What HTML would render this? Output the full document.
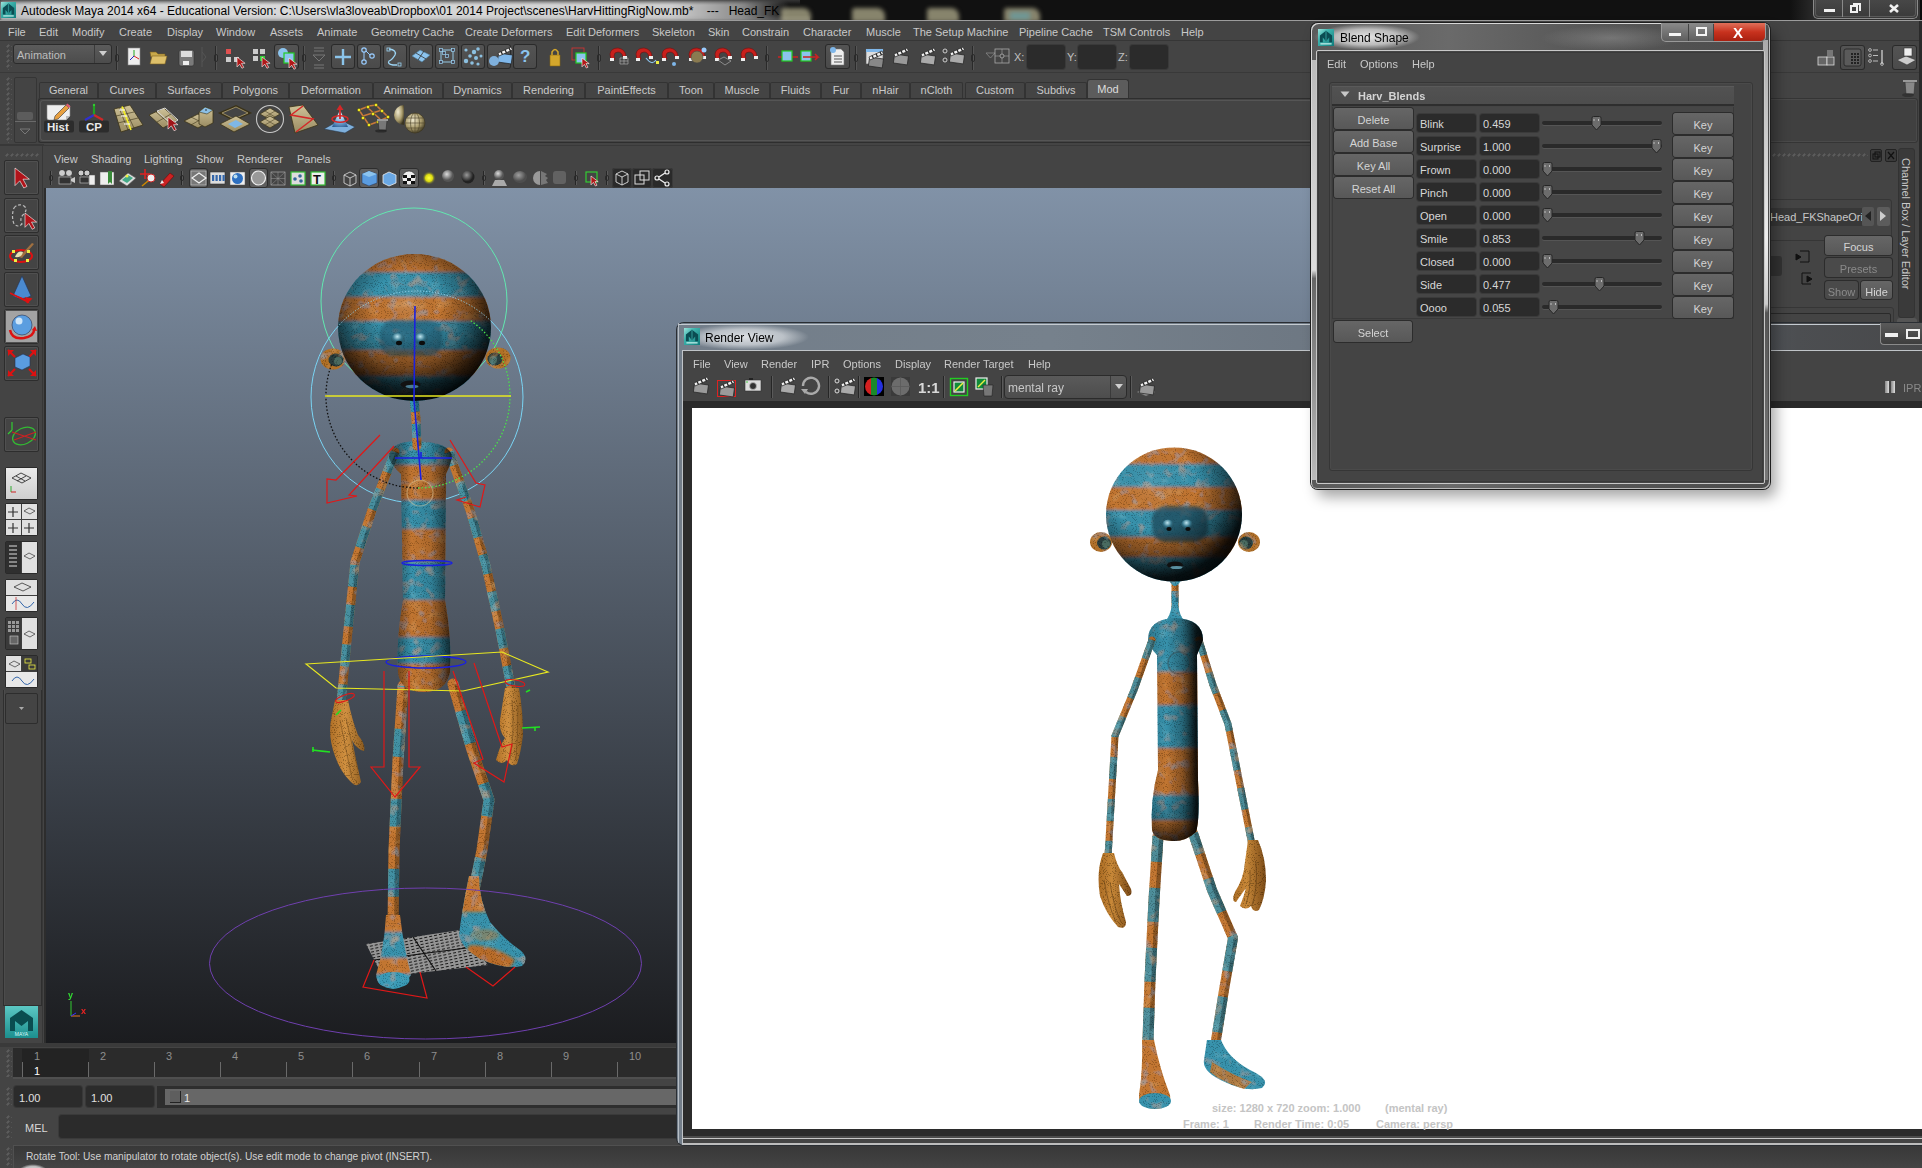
<!DOCTYPE html>
<html><head><meta charset="utf-8"><style>
*{margin:0;padding:0;box-sizing:border-box}
html,body{width:1922px;height:1168px;overflow:hidden;background:#444;font-family:"Liberation Sans",sans-serif;font-size:11px;color:#c9c9c9;position:relative}
.a{position:absolute}
svg.a{overflow:visible}
.t{position:absolute;white-space:nowrap;line-height:1}
.fld{position:absolute;background:#2b2b2b;border-radius:3px;box-shadow:0 0 0 1px #3d3d3d}
.btn{position:absolute;background:linear-gradient(#666,#585858);border-radius:3px;box-shadow:0 0 0 1px #2c2c2c;color:#d4d4d4;text-align:center;padding-top:2px}
.ib{position:absolute;background:#3a3a3a;border-radius:3px;box-shadow:inset 0 0 0 1px #2e2e2e}
.dots{position:absolute;background-image:radial-gradient(circle at 1.5px 2.5px,#5c5c5c 0.9px,transparent 1.2px),radial-gradient(circle at 2.5px 1.5px,#5c5c5c 0.9px,transparent 1.2px);background-size:5px 5px}
</style></head><body>
<div class="a" style="left:0px;top:0px;width:1922px;height:21px;background:#111"></div>
<div class="a" style="left:0px;top:0px;width:790px;height:21px;background:linear-gradient(90deg,#b9bbbd 0%,#d2d3d4 6%,#d9d9d9 40%,#cfcfcf 85%,rgba(160,160,160,0.85) 94%,rgba(40,40,40,0) 100%);border-radius:0 10px 0 0;filter:blur(1.5px)"></div>
<div class="a" style="left:0px;top:15px;width:810px;height:6px;background:linear-gradient(rgba(255,255,255,0),rgba(150,150,150,.4))"></div>
<div class="a" style="left:0px;top:0px;width:800px;height:5px;background:linear-gradient(rgba(70,70,70,.65),rgba(70,70,70,0))"></div>
<div class="a" style="left:781px;top:8px;width:30px;height:14px;background:rgba(215,210,170,.6);border-radius:3px 8px 0 0;filter:blur(2px)"></div>
<div class="a" style="left:852px;top:8px;width:33px;height:14px;background:rgba(215,210,170,.6);border-radius:3px 8px 0 0;filter:blur(2px)"></div>
<div class="a" style="left:927px;top:8px;width:32px;height:14px;background:rgba(215,210,170,.6);border-radius:3px 8px 0 0;filter:blur(2px)"></div>
<div class="a" style="left:1004px;top:8px;width:36px;height:14px;background:rgba(215,210,170,.6);border-radius:3px 8px 0 0;filter:blur(2px)"></div>
<div class="a" style="left:1010px;top:12px;width:20px;height:8px;background:rgba(90,170,190,.5);filter:blur(2px)"></div>
<svg class="a" style="left:1px;top:2px;" width="15" height="16" viewBox="0 0 15 16"><defs><linearGradient id="mg1_2" x1="0" y1="0" x2="1" y2="1"><stop offset="0" stop-color="#9ee4dc"/><stop offset=".35" stop-color="#3fb4ae"/><stop offset="1" stop-color="#0f7a7a"/></linearGradient></defs><rect x="0" y="0" width="15" height="16" fill="url(#mg1_2)"/><path d="M1.7999999999999998 12.48 L1.7999999999999998 6.08 L7.5 1.6 L13.2 6.08 L13.2 12.48 L10.5 12.48 L10.5 8.0 L7.5 11.52 L4.5 8.0 L4.5 12.48 z" fill="#0b4c52"/><path d="M7.5 1.6 L7.5 11.52" stroke="#2a8a8a" stroke-width="1.2"/><rect x="2.25" y="13.12" width="10.5" height="1.6" fill="#bdeee8" opacity=".8"/></svg>
<span class="t" style="left:21px;top:5px;font-size:12px;color:#000;">Autodesk Maya 2014 x64 - Educational Version: C:\Users\vla3loveab\Dropbox\01 2014 Project\scenes\HarvHittingRigNow.mb* &nbsp;&nbsp; --- &nbsp;&nbsp;Head_FK</span>
<div class="a" style="left:1790px;top:0px;width:132px;height:20px;background:linear-gradient(90deg,rgba(17,17,17,0),#2c2c2c 20%,#333)"></div>
<div class="a" style="left:1813px;top:0px;width:105px;height:19px;border:1px solid #8a8a8a;border-top:none;border-radius:0 0 5px 5px;background:linear-gradient(#474747,#3a3a3a)"></div>
<div class="a" style="left:1815px;top:0px;width:101px;height:17px;border:1px solid #5a5a5a;border-top:none;border-radius:0 0 4px 4px"></div>
<div class="a" style="left:1842px;top:0px;width:1px;height:17px;background:#8a8a8a"></div>
<div class="a" style="left:1869px;top:0px;width:1px;height:17px;background:#8a8a8a"></div>
<div class="a" style="left:1824px;top:9px;width:11px;height:3px;background:#f0f0f0"></div>
<div class="a" style="left:1850px;top:5px;width:8px;height:8px;border:2px solid #f0f0f0"></div>
<div class="a" style="left:1853px;top:3px;width:8px;height:8px;border-top:2px solid #f0f0f0;border-right:2px solid #f0f0f0"></div>
<svg class="a" style="left:1889px;top:4px;" width="10" height="9" viewBox="0 0 10 9"><path d="M1 1 L9 8 M9 1 L1 8" stroke="#f0f0f0" stroke-width="2.6"/></svg>
<div class="a" style="left:1920px;top:0px;width:2px;height:1168px;background:#0a0a0a"></div>
<div class="a" style="left:0px;top:20px;width:1922px;height:1px;background:#9c9c9c"></div>
<div class="a" style="left:0px;top:21px;width:1922px;height:20px;background:#444"></div>
<span class="t" style="left:8px;top:27px;">File</span>
<span class="t" style="left:39px;top:27px;">Edit</span>
<span class="t" style="left:72px;top:27px;">Modify</span>
<span class="t" style="left:119px;top:27px;">Create</span>
<span class="t" style="left:167px;top:27px;">Display</span>
<span class="t" style="left:216px;top:27px;">Window</span>
<span class="t" style="left:270px;top:27px;">Assets</span>
<span class="t" style="left:317px;top:27px;">Animate</span>
<span class="t" style="left:371px;top:27px;">Geometry Cache</span>
<span class="t" style="left:465px;top:27px;">Create Deformers</span>
<span class="t" style="left:566px;top:27px;">Edit Deformers</span>
<span class="t" style="left:652px;top:27px;">Skeleton</span>
<span class="t" style="left:708px;top:27px;">Skin</span>
<span class="t" style="left:742px;top:27px;">Constrain</span>
<span class="t" style="left:803px;top:27px;">Character</span>
<span class="t" style="left:866px;top:27px;">Muscle</span>
<span class="t" style="left:913px;top:27px;">The Setup Machine</span>
<span class="t" style="left:1019px;top:27px;">Pipeline Cache</span>
<span class="t" style="left:1103px;top:27px;">TSM Controls</span>
<span class="t" style="left:1181px;top:27px;">Help</span>
<div class="a" style="left:0px;top:40px;width:1922px;height:1px;background:#363636"></div>
<div class="a" style="left:0px;top:41px;width:1922px;height:32px;background:#444"></div>
<div class="dots" style="left:6px;top:44px;width:6px;height:26px"></div>
<div class="a" style="left:13px;top:44px;width:99px;height:20px;background:linear-gradient(#5b5b5b,#4c4c4c);border:1px solid #2b2b2b;border-radius:3px"></div>
<div class="a" style="left:94px;top:45px;width:1px;height:18px;background:#3a3a3a"></div>
<span class="t" style="left:17px;top:50px;color:#bdbdbd;">Animation</span>
<svg class="a" style="left:98px;top:50px;" width="10" height="8" viewBox="0 0 10 8"><path d="M1 1 L9 1 L5 6 z" fill="#cfcfcf"/></svg>
<div class="a" style="left:116px;top:46px;width:1px;height:24px;background:#2a2a2a"></div>
<div class="a" style="left:117px;top:46px;width:1px;height:24px;background:#555"></div>
<div class="a" style="left:115px;top:54px;width:4px;height:8px;border:1px solid #2a2a2a;border-radius:2px"></div>
<svg class="a" style="left:0px;top:0px;" width="1" height="1" viewBox="0 0 1 1"><rect x="128" y="48" width="12" height="17" rx="0" fill="#eee" stroke="#888" stroke-width="0.6"/><line x1="134" y1="50" x2="134" y2="56" stroke="#2a2" stroke-width="1"/><line x1="134" y1="56" x2="130" y2="60" stroke="#22c" stroke-width="1"/><line x1="134" y1="56" x2="139" y2="59" stroke="#d22" stroke-width="1"/><path d="M150 52 h6 l2 2 h7 v3 h-14 z" fill="#c9a94a" stroke="#7a6020" stroke-width="0.6" /><path d="M150 64 l2 -8 h15 l-2 8 z" fill="#dec06a" stroke="#7a6020" stroke-width="0.6" /><rect x="179" y="50" width="15" height="16" rx="2" fill="#7a7a7a" stroke="#333" stroke-width="0.6"/><rect x="181" y="51" width="11" height="6" rx="0" fill="#ddd" stroke="none" stroke-width="1"/><rect x="183" y="61" width="6" height="4" rx="0" fill="#eee" stroke="none" stroke-width="1"/><path d="M202 47 l0 20 M202 52 l4 5 l-4 5" fill="none" stroke="#555" stroke-width="1" /></svg>
<div class="a" style="left:215px;top:46px;width:1px;height:24px;background:#2a2a2a"></div>
<div class="a" style="left:216px;top:46px;width:1px;height:24px;background:#555"></div>
<div class="a" style="left:214px;top:54px;width:4px;height:8px;border:1px solid #2a2a2a;border-radius:2px"></div>
<svg class="a" style="left:0px;top:0px;" width="1" height="1" viewBox="0 0 1 1"><rect x="226" y="49" width="5" height="5" rx="0" fill="#e05050" stroke="none" stroke-width="1"/><rect x="226" y="57" width="5" height="5" rx="0" fill="#ccc" stroke="none" stroke-width="1"/><rect x="234" y="57" width="5" height="5" rx="0" fill="#ccc" stroke="none" stroke-width="1"/><path d="M237 57 l0 9.9 l2.7 -2.7 l2.25 4.05 l1.8 -0.9 l-2.25 -4.05 l3.6 0 z" fill="#b01818" stroke="#fff" stroke-width="0.6"/><rect x="253" y="49" width="5" height="5" rx="0" fill="#ccc" stroke="none" stroke-width="1"/><rect x="260" y="49" width="5" height="5" rx="0" fill="#ccc" stroke="none" stroke-width="1"/><rect x="253" y="56" width="5" height="5" rx="0" fill="#ccc" stroke="none" stroke-width="1"/><rect x="260" y="56" width="5" height="5" rx="0" fill="#3c3" stroke="none" stroke-width="1"/><path d="M262 57 l0 9.9 l2.7 -2.7 l2.25 4.05 l1.8 -0.9 l-2.25 -4.05 l3.6 0 z" fill="#b01818" stroke="#fff" stroke-width="0.6"/></svg>
<div class="a" style="left:274px;top:44px;width:25px;height:25px;background:linear-gradient(#545454,#4a4a4a);border-radius:3px;box-shadow:inset 0 0 0 1px #2a2a2a"></div>
<svg class="a" style="left:0px;top:0px;" width="1" height="1" viewBox="0 0 1 1"><circle cx="283" cy="53" r="5" fill="#8cc4ee" stroke="none" stroke-width="1"/><rect x="284" y="53" width="10" height="10" rx="0" fill="#8cc4ee" stroke="#2c2" stroke-width="1.2"/><path d="M289 58 l0 9.9 l2.7 -2.7 l2.25 4.05 l1.8 -0.9 l-2.25 -4.05 l3.6 0 z" fill="#b01818" stroke="#fff" stroke-width="0.6"/></svg>
<div class="a" style="left:303px;top:46px;width:1px;height:24px;background:#2a2a2a"></div>
<div class="a" style="left:304px;top:46px;width:1px;height:24px;background:#555"></div>
<div class="a" style="left:302px;top:54px;width:4px;height:8px;border:1px solid #2a2a2a;border-radius:2px"></div>
<svg class="a" style="left:313px;top:47px;" width="12" height="22" viewBox="0 0 12 22"><path d="M1 1 h10 M1 4 h10 M0 8 L12 8 L6 14 z M1 18 h10 M1 21 h10" stroke="#777" fill="none"/></svg>
<div class="a" style="left:331px;top:44px;width:24px;height:25px;background:linear-gradient(#545454,#4a4a4a);border-radius:3px;box-shadow:inset 0 0 0 1px #2a2a2a"></div>
<div class="a" style="left:357px;top:44px;width:24px;height:25px;background:linear-gradient(#545454,#4a4a4a);border-radius:3px;box-shadow:inset 0 0 0 1px #2a2a2a"></div>
<div class="a" style="left:383px;top:44px;width:24px;height:25px;background:linear-gradient(#545454,#4a4a4a);border-radius:3px;box-shadow:inset 0 0 0 1px #2a2a2a"></div>
<div class="a" style="left:409px;top:44px;width:24px;height:25px;background:linear-gradient(#545454,#4a4a4a);border-radius:3px;box-shadow:inset 0 0 0 1px #2a2a2a"></div>
<div class="a" style="left:435px;top:44px;width:24px;height:25px;background:linear-gradient(#545454,#4a4a4a);border-radius:3px;box-shadow:inset 0 0 0 1px #2a2a2a"></div>
<div class="a" style="left:461px;top:44px;width:24px;height:25px;background:linear-gradient(#545454,#4a4a4a);border-radius:3px;box-shadow:inset 0 0 0 1px #2a2a2a"></div>
<div class="a" style="left:487px;top:44px;width:24px;height:25px;background:linear-gradient(#545454,#4a4a4a);border-radius:3px;box-shadow:inset 0 0 0 1px #2a2a2a"></div>
<div class="a" style="left:513px;top:44px;width:24px;height:25px;background:linear-gradient(#545454,#4a4a4a);border-radius:3px;box-shadow:inset 0 0 0 1px #2a2a2a"></div>
<svg class="a" style="left:0px;top:0px;" width="1" height="1" viewBox="0 0 1 1"><path d="M343 49 v16 M335 57 h16" fill="none" stroke="#8bc4ea" stroke-width="2.4" /><circle cx="364" cy="50" r="2.2" fill="none" stroke="#9cf" stroke-width="1.2"/><circle cx="364" cy="62" r="2.2" fill="none" stroke="#9cf" stroke-width="1.2"/><circle cx="372" cy="56" r="2.2" fill="none" stroke="#9cf" stroke-width="1.2"/><line x1="364" y1="52" x2="364" y2="60" stroke="#9cf" stroke-width="1"/><line x1="366" y1="51" x2="370" y2="55" stroke="#9cf" stroke-width="1"/><path d="M389 49 q8 1 6 6 q-3 5 -6 6 q-2 3 4 4 l4 0" fill="none" stroke="#9cd4f4" stroke-width="1.3" /><rect x="387" y="48" width="3" height="3" rx="0" fill="none" stroke="#9cd4f4" stroke-width="0.8"/><rect x="398" y="63" width="3" height="3" rx="0" fill="none" stroke="#9cd4f4" stroke-width="0.8"/><path d="M412 56 l8 -6 l10 5 l-8 7 z" fill="#8cc4ee" stroke="#4a7a9a" stroke-width="0.6" /><line x1="416" y1="53" x2="426" y2="59" stroke="#333" stroke-width="0.8"/><line x1="424" y1="51" x2="418" y2="60" stroke="#333" stroke-width="0.8"/><rect x="441" y="50" width="12" height="12" rx="0" fill="none" stroke="#9cd4f4" stroke-width="0.9"/><rect x="439.5" y="48.5" width="3" height="3" rx="0" fill="#445" stroke="#9cd4f4" stroke-width="0.7"/><rect x="451.5" y="48.5" width="3" height="3" rx="0" fill="#445" stroke="#9cd4f4" stroke-width="0.7"/><rect x="439.5" y="60.5" width="3" height="3" rx="0" fill="#445" stroke="#9cd4f4" stroke-width="0.7"/><rect x="451.5" y="60.5" width="3" height="3" rx="0" fill="#445" stroke="#9cd4f4" stroke-width="0.7"/><rect x="445.5" y="54.5" width="3" height="3" rx="0" fill="#445" stroke="#9cd4f4" stroke-width="0.7"/><rect x="442.5" y="51.5" width="3" height="3" rx="0" fill="#445" stroke="#9cd4f4" stroke-width="0.7"/><circle cx="466" cy="50" r="1.6" fill="#8cc0e0" stroke="none" stroke-width="1"/><circle cx="474" cy="52" r="2.2" fill="#8cc0e0" stroke="none" stroke-width="1"/><circle cx="478" cy="49" r="1.8" fill="#8cc0e0" stroke="none" stroke-width="1"/><circle cx="470" cy="56" r="1.8" fill="#8cc0e0" stroke="none" stroke-width="1"/><circle cx="476" cy="58" r="2" fill="#8cc0e0" stroke="none" stroke-width="1"/><circle cx="481" cy="56" r="1.5" fill="#8cc0e0" stroke="none" stroke-width="1"/><circle cx="466" cy="61" r="2.2" fill="#8cc0e0" stroke="none" stroke-width="1"/><circle cx="472" cy="63" r="1.8" fill="#8cc0e0" stroke="none" stroke-width="1"/><circle cx="478" cy="64" r="1.6" fill="#8cc0e0" stroke="none" stroke-width="1"/><path d="M498 54 L512 54 L512 63 L498 63 z" fill="#7fb7ea" stroke="#222" stroke-width="0.7" transform="rotate(8 505 58)"/><path d="M498 53 L511 47 L512.5 50 L499 56 z" fill="#f0f0f0" stroke="#222" stroke-width="0.7"/><path d="M501 51.5 l1.5 3 M505 49.7 l1.5 3 M509 48 l1.5 3" stroke="#222" stroke-width="1.3"/><circle cx="494" cy="61" r="5" fill="#7fb0dc" stroke="none" stroke-width="1"/></svg>
<span class="t" style="left:520px;top:48px;font-size:17px;color:#8cc4ee;font-weight:bold;">?</span>
<svg class="a" style="left:0px;top:0px;" width="1" height="1" viewBox="0 0 1 1"><path d="M550 55 h10 v11 h-10 z" fill="#d4a72c" stroke="#8a6a10" stroke-width="0.6" /><path d="M552 55 v-3 q3 -5 6 0 v3" fill="none" stroke="#d4a72c" stroke-width="1.5" /></svg>
<svg class="a" style="left:0px;top:0px;" width="1" height="1" viewBox="0 0 1 1"><rect x="572" y="48" width="12" height="12" rx="0" fill="none" stroke="#d33" stroke-width="0.8"/><rect x="576" y="53" width="10" height="10" rx="0" fill="#8cc4ee" stroke="#2c2" stroke-width="1.2"/><path d="M582 58 l0 8.8 l2.4000000000000004 -2.4000000000000004 l2.0 3.6 l1.6 -0.8 l-2.0 -3.6 l3.2 0 z" fill="#b01818" stroke="#fff" stroke-width="0.6"/></svg>
<div class="a" style="left:598px;top:46px;width:1px;height:24px;background:#2a2a2a"></div>
<div class="a" style="left:599px;top:46px;width:1px;height:24px;background:#555"></div>
<div class="a" style="left:597px;top:54px;width:4px;height:8px;border:1px solid #2a2a2a;border-radius:2px"></div>
<svg class="a" style="left:0px;top:0px;" width="1" height="1" viewBox="0 0 1 1"><path d="M611 60 L610 54 Q611 48 618 48 Q625 49 626 56 L623 57 Q622 52 618 52 Q614 52 614 56 L615 59 z" fill="#c8201c" stroke="#7a0d0d" stroke-width="0.6"/><rect x="610" y="58" width="4" height="3" fill="#eee"/><rect x="623" y="56" width="4" height="3" fill="#eee"/><path d="M637 60 L636 54 Q637 48 644 48 Q651 49 652 56 L649 57 Q648 52 644 52 Q640 52 640 56 L641 59 z" fill="#c8201c" stroke="#7a0d0d" stroke-width="0.6"/><rect x="636" y="58" width="4" height="3" fill="#eee"/><rect x="649" y="56" width="4" height="3" fill="#eee"/><path d="M663 60 L662 54 Q663 48 670 48 Q677 49 678 56 L675 57 Q674 52 670 52 Q666 52 666 56 L667 59 z" fill="#c8201c" stroke="#7a0d0d" stroke-width="0.6"/><rect x="662" y="58" width="4" height="3" fill="#eee"/><rect x="675" y="56" width="4" height="3" fill="#eee"/><path d="M690 60 L689 54 Q690 48 697 48 Q704 49 705 56 L702 57 Q701 52 697 52 Q693 52 693 56 L694 59 z" fill="#c8201c" stroke="#7a0d0d" stroke-width="0.6"/><rect x="689" y="58" width="4" height="3" fill="#eee"/><rect x="702" y="56" width="4" height="3" fill="#eee"/><path d="M716 60 L715 54 Q716 48 723 48 Q730 49 731 56 L728 57 Q727 52 723 52 Q719 52 719 56 L720 59 z" fill="#c8201c" stroke="#7a0d0d" stroke-width="0.6"/><rect x="715" y="58" width="4" height="3" fill="#eee"/><rect x="728" y="56" width="4" height="3" fill="#eee"/><path d="M742 60 L741 54 Q742 48 749 48 Q756 49 757 56 L754 57 Q753 52 749 52 Q745 52 745 56 L746 59 z" fill="#c8201c" stroke="#7a0d0d" stroke-width="0.6"/><rect x="741" y="58" width="4" height="3" fill="#eee"/><rect x="754" y="56" width="4" height="3" fill="#eee"/><path d="M620 58 l8 0 l0 6 l-8 0 z M624 58 v6 M620 61 h8" fill="none" stroke="#bbb" stroke-width="0.6" /><path d="M646 58 q6 8 10 2" fill="none" stroke="#8cc4ee" stroke-width="1.2" /><rect x="656" y="61" width="3" height="3" rx="0" fill="#ee4" stroke="none" stroke-width="1"/><circle cx="674" cy="64" r="2" fill="#7fb7ea" stroke="none" stroke-width="1"/><circle cx="697" cy="57" r="6" fill="#8a7a50" stroke="#444" stroke-width="0.6"/><circle cx="704" cy="50" r="2.5" fill="#9cf" stroke="none" stroke-width="1"/><path d="M718 60 l6 -3 l7 4 l-6 4 z" fill="none" stroke="#bbb" stroke-width="0.6" /></svg>
<div class="a" style="left:766px;top:46px;width:1px;height:24px;background:#2a2a2a"></div>
<div class="a" style="left:767px;top:46px;width:1px;height:24px;background:#555"></div>
<div class="a" style="left:765px;top:54px;width:4px;height:8px;border:1px solid #2a2a2a;border-radius:2px"></div>
<svg class="a" style="left:0px;top:0px;" width="1" height="1" viewBox="0 0 1 1"><path d="M778 57 h20" fill="none" stroke="#c22" stroke-width="1.5" /><rect x="782" y="51" width="10" height="10" rx="0" fill="#8cc4ee" stroke="#2c2" stroke-width="1.2"/><rect x="801" y="51" width="10" height="10" rx="0" fill="#8cc4ee" stroke="#2c2" stroke-width="1.2"/><path d="M803 57 h15 l-3 -3 M818 57 l-3 3" fill="none" stroke="#c22" stroke-width="1.5" /></svg>
<div class="a" style="left:825px;top:44px;width:25px;height:25px;background:linear-gradient(#545454,#4a4a4a);border-radius:3px;box-shadow:inset 0 0 0 1px #2a2a2a"></div>
<svg class="a" style="left:0px;top:0px;" width="1" height="1" viewBox="0 0 1 1"><path d="M831 49 h10 l3 3 v13 h-13 z" fill="#eee" stroke="#777" stroke-width="0.6" /><circle cx="833" cy="50" r="3" fill="#7fb7ea" stroke="none" stroke-width="1"/><line x1="834" y1="56" x2="842" y2="56" stroke="#555" stroke-width="1"/><line x1="834" y1="59" x2="842" y2="59" stroke="#555" stroke-width="1"/><line x1="834" y1="62" x2="842" y2="62" stroke="#555" stroke-width="1"/></svg>
<div class="a" style="left:855px;top:46px;width:1px;height:24px;background:#2a2a2a"></div>
<div class="a" style="left:856px;top:46px;width:1px;height:24px;background:#555"></div>
<div class="a" style="left:854px;top:54px;width:4px;height:8px;border:1px solid #2a2a2a;border-radius:2px"></div>
<svg class="a" style="left:0px;top:0px;" width="1" height="1" viewBox="0 0 1 1"><rect x="866" y="49" width="17" height="15" rx="0" fill="#ddd" stroke="#555" stroke-width="0.6"/><rect x="866" y="49" width="17" height="3" rx="0" fill="#7fb7ea" stroke="none" stroke-width="1"/><path d="M869 58 L883 58 L883 67 L869 67 z" fill="#888" stroke="#222" stroke-width="0.7" transform="rotate(8 876 62)"/><path d="M869 57 L882 51 L883.5 54 L870 60 z" fill="#f0f0f0" stroke="#222" stroke-width="0.7"/><path d="M872 55.5 l1.5 3 M876 53.7 l1.5 3 M880 52 l1.5 3" stroke="#222" stroke-width="1.3"/><path d="M894 55 L908 55 L908 64 L894 64 z" fill="#999" stroke="#222" stroke-width="0.7" transform="rotate(8 901 59)"/><path d="M894 54 L907 48 L908.5 51 L895 57 z" fill="#f0f0f0" stroke="#222" stroke-width="0.7"/><path d="M897 52.5 l1.5 3 M901 50.7 l1.5 3 M905 49 l1.5 3" stroke="#222" stroke-width="1.3"/><path d="M921 55 L935 55 L935 64 L921 64 z" fill="#aaa" stroke="#222" stroke-width="0.7" transform="rotate(8 928 59)"/><path d="M921 54 L934 48 L935.5 51 L922 57 z" fill="#f0f0f0" stroke="#222" stroke-width="0.7"/><path d="M924 52.5 l1.5 3 M928 50.7 l1.5 3 M932 49 l1.5 3" stroke="#222" stroke-width="1.3"/><circle cx="945" cy="51" r="2" fill="none" stroke="#ccc" stroke-width="1"/><circle cx="945" cy="60" r="2" fill="none" stroke="#ccc" stroke-width="1"/><path d="M950 54 L964 54 L964 63 L950 63 z" fill="#aaa" stroke="#222" stroke-width="0.7" transform="rotate(8 957 58)"/><path d="M950 53 L963 47 L964.5 50 L951 56 z" fill="#f0f0f0" stroke="#222" stroke-width="0.7"/><path d="M953 51.5 l1.5 3 M957 49.7 l1.5 3 M961 48 l1.5 3" stroke="#222" stroke-width="1.3"/></svg>
<div class="a" style="left:972px;top:46px;width:1px;height:24px;background:#2a2a2a"></div>
<div class="a" style="left:973px;top:46px;width:1px;height:24px;background:#555"></div>
<div class="a" style="left:971px;top:54px;width:4px;height:8px;border:1px solid #2a2a2a;border-radius:2px"></div>
<svg class="a" style="left:0px;top:0px;" width="1" height="1" viewBox="0 0 1 1"><path d="M986 53 h9 l-4.5 5 z" fill="none" stroke="#888" stroke-width="0.8" /><rect x="995" y="49" width="14" height="14" rx="0" fill="none" stroke="#aaa" stroke-width="0.8"/><line x1="1002" y1="49" x2="1002" y2="63" stroke="#aaa" stroke-width="0.6"/><line x1="995" y1="56" x2="1009" y2="56" stroke="#aaa" stroke-width="0.6"/><circle cx="1002" cy="56" r="2" fill="#444" stroke="#ccc" stroke-width="0.6"/></svg>
<span class="t" style="left:1014px;top:52px;color:#c0c0c0;">X:</span>
<div class="a" style="left:1027px;top:45px;width:38px;height:24px;background:#2b2b2b;border-radius:3px;box-shadow:0 0 0 1px #3a3a3a"></div>
<span class="t" style="left:1067px;top:52px;color:#c0c0c0;">Y:</span>
<div class="a" style="left:1078px;top:45px;width:38px;height:24px;background:#2b2b2b;border-radius:3px;box-shadow:0 0 0 1px #3a3a3a"></div>
<span class="t" style="left:1118px;top:52px;color:#c0c0c0;">Z:</span>
<div class="a" style="left:1130px;top:45px;width:38px;height:24px;background:#2b2b2b;border-radius:3px;box-shadow:0 0 0 1px #3a3a3a"></div>
<div class="a" style="left:1840px;top:45px;width:25px;height:25px;background:linear-gradient(#545454,#4a4a4a);border-radius:3px;box-shadow:inset 0 0 0 1px #2a2a2a"></div>
<div class="a" style="left:1892px;top:45px;width:25px;height:25px;background:linear-gradient(#545454,#4a4a4a);border-radius:3px;box-shadow:inset 0 0 0 1px #2a2a2a"></div>
<svg class="a" style="left:0px;top:0px;" width="1" height="1" viewBox="0 0 1 1"><rect x="1818" y="57" width="9" height="8" rx="0" fill="#666" stroke="#ddd" stroke-width="0.8"/><rect x="1827" y="57" width="7" height="8" rx="0" fill="#666" stroke="#ddd" stroke-width="0.8"/><rect x="1827" y="50" width="6" height="6" rx="0" fill="#777" stroke="none" stroke-width="1"/><rect x="1844" y="49" width="17" height="17" rx="2" fill="#5a5a5a" stroke="#222" stroke-width="0.8"/><rect x="1851" y="53" width="2" height="2" rx="0" fill="#222" stroke="none" stroke-width="1"/><rect x="1851" y="56" width="2" height="2" rx="0" fill="#222" stroke="none" stroke-width="1"/><rect x="1851" y="59" width="2" height="2" rx="0" fill="#222" stroke="none" stroke-width="1"/><rect x="1851" y="62" width="2" height="2" rx="0" fill="#222" stroke="none" stroke-width="1"/><rect x="1854" y="53" width="2" height="2" rx="0" fill="#222" stroke="none" stroke-width="1"/><rect x="1854" y="56" width="2" height="2" rx="0" fill="#222" stroke="none" stroke-width="1"/><rect x="1854" y="59" width="2" height="2" rx="0" fill="#222" stroke="none" stroke-width="1"/><rect x="1854" y="62" width="2" height="2" rx="0" fill="#222" stroke="none" stroke-width="1"/><rect x="1857" y="53" width="2" height="2" rx="0" fill="#222" stroke="none" stroke-width="1"/><rect x="1857" y="56" width="2" height="2" rx="0" fill="#222" stroke="none" stroke-width="1"/><rect x="1857" y="59" width="2" height="2" rx="0" fill="#222" stroke="none" stroke-width="1"/><rect x="1857" y="62" width="2" height="2" rx="0" fill="#222" stroke="none" stroke-width="1"/><circle cx="1870" cy="50.0" r="1.4" fill="none" stroke="#ddd" stroke-width="0.7"/><line x1="1873" y1="50.0" x2="1878" y2="50.0" stroke="#ddd" stroke-width="0.8"/><circle cx="1870" cy="55.5" r="1.4" fill="none" stroke="#ddd" stroke-width="0.7"/><line x1="1873" y1="55.5" x2="1878" y2="55.5" stroke="#ddd" stroke-width="0.8"/><circle cx="1870" cy="61.0" r="1.4" fill="none" stroke="#ddd" stroke-width="0.7"/><line x1="1873" y1="61.0" x2="1878" y2="61.0" stroke="#ddd" stroke-width="0.8"/><line x1="1882" y1="50" x2="1882" y2="64" stroke="#ddd" stroke-width="1.2"/><circle cx="1882" cy="64" r="1.4" fill="none" stroke="#ddd" stroke-width="0.7"/><path d="M1897 60 l9 -4 l10 4 l-9 5 z" fill="#ccc" stroke="#333" stroke-width="0.6" /><rect x="1904" y="48" width="8" height="8" rx="0" fill="#eee" stroke="#333" stroke-width="0.6"/></svg>
<div class="a" style="left:0px;top:72px;width:1922px;height:1px;background:#393939"></div>
<div class="dots" style="left:6px;top:77px;width:6px;height:66px"></div>
<div class="a" style="left:14px;top:77px;width:23px;height:66px;background:#444;border:1px solid #353535;border-radius:2px"></div>
<div class="a" style="left:17px;top:112px;width:16px;height:8px;background:#5c5c5c;border-radius:2px"></div>
<div class="a" style="left:15px;top:121px;width:21px;height:1px;background:#6a6a6a"></div>
<svg class="a" style="left:19px;top:128px;" width="12" height="8" viewBox="0 0 12 8"><path d="M1 1 L11 1 L6 6 z" fill="none" stroke="#777"/></svg>
<div class="a" style="left:38px;top:98px;width:1884px;height:45px;background:#444;border:1px solid #2e2e2e;border-right:none;border-radius:3px 0 0 3px"></div>
<div class="a" style="left:40px;top:100px;width:1882px;height:41px;border:1px solid #555;border-right:none;border-radius:3px 0 0 3px"></div>
<div class="a" style="left:39px;top:82px;width:59px;height:16px;background:#444;border:1px solid #333;border-bottom:none;border-radius:2px 2px 0 0"></div>
<span class="t" style="left:39px;top:85px;width:59px;text-align:center">General</span>
<div class="a" style="left:98px;top:82px;width:58px;height:16px;background:#444;border:1px solid #333;border-bottom:none;border-radius:2px 2px 0 0"></div>
<span class="t" style="left:98px;top:85px;width:58px;text-align:center">Curves</span>
<div class="a" style="left:156px;top:82px;width:66px;height:16px;background:#444;border:1px solid #333;border-bottom:none;border-radius:2px 2px 0 0"></div>
<span class="t" style="left:156px;top:85px;width:66px;text-align:center">Surfaces</span>
<div class="a" style="left:222px;top:82px;width:67px;height:16px;background:#444;border:1px solid #333;border-bottom:none;border-radius:2px 2px 0 0"></div>
<span class="t" style="left:222px;top:85px;width:67px;text-align:center">Polygons</span>
<div class="a" style="left:289px;top:82px;width:84px;height:16px;background:#444;border:1px solid #333;border-bottom:none;border-radius:2px 2px 0 0"></div>
<span class="t" style="left:289px;top:85px;width:84px;text-align:center">Deformation</span>
<div class="a" style="left:373px;top:82px;width:70px;height:16px;background:#444;border:1px solid #333;border-bottom:none;border-radius:2px 2px 0 0"></div>
<span class="t" style="left:373px;top:85px;width:70px;text-align:center">Animation</span>
<div class="a" style="left:443px;top:82px;width:69px;height:16px;background:#444;border:1px solid #333;border-bottom:none;border-radius:2px 2px 0 0"></div>
<span class="t" style="left:443px;top:85px;width:69px;text-align:center">Dynamics</span>
<div class="a" style="left:512px;top:82px;width:73px;height:16px;background:#444;border:1px solid #333;border-bottom:none;border-radius:2px 2px 0 0"></div>
<span class="t" style="left:512px;top:85px;width:73px;text-align:center">Rendering</span>
<div class="a" style="left:585px;top:82px;width:83px;height:16px;background:#444;border:1px solid #333;border-bottom:none;border-radius:2px 2px 0 0"></div>
<span class="t" style="left:585px;top:85px;width:83px;text-align:center">PaintEffects</span>
<div class="a" style="left:668px;top:82px;width:46px;height:16px;background:#444;border:1px solid #333;border-bottom:none;border-radius:2px 2px 0 0"></div>
<span class="t" style="left:668px;top:85px;width:46px;text-align:center">Toon</span>
<div class="a" style="left:714px;top:82px;width:56px;height:16px;background:#444;border:1px solid #333;border-bottom:none;border-radius:2px 2px 0 0"></div>
<span class="t" style="left:714px;top:85px;width:56px;text-align:center">Muscle</span>
<div class="a" style="left:770px;top:82px;width:51px;height:16px;background:#444;border:1px solid #333;border-bottom:none;border-radius:2px 2px 0 0"></div>
<span class="t" style="left:770px;top:85px;width:51px;text-align:center">Fluids</span>
<div class="a" style="left:821px;top:82px;width:40px;height:16px;background:#444;border:1px solid #333;border-bottom:none;border-radius:2px 2px 0 0"></div>
<span class="t" style="left:821px;top:85px;width:40px;text-align:center">Fur</span>
<div class="a" style="left:861px;top:82px;width:49px;height:16px;background:#444;border:1px solid #333;border-bottom:none;border-radius:2px 2px 0 0"></div>
<span class="t" style="left:861px;top:85px;width:49px;text-align:center">nHair</span>
<div class="a" style="left:910px;top:82px;width:53px;height:16px;background:#444;border:1px solid #333;border-bottom:none;border-radius:2px 2px 0 0"></div>
<span class="t" style="left:910px;top:85px;width:53px;text-align:center">nCloth</span>
<div class="a" style="left:965px;top:82px;width:60px;height:16px;background:#444;border:1px solid #333;border-bottom:none;border-radius:2px 2px 0 0"></div>
<span class="t" style="left:965px;top:85px;width:60px;text-align:center">Custom</span>
<div class="a" style="left:1025px;top:82px;width:62px;height:16px;background:#444;border:1px solid #333;border-bottom:none;border-radius:2px 2px 0 0"></div>
<span class="t" style="left:1025px;top:85px;width:62px;text-align:center">Subdivs</span>
<div class="a" style="left:1087px;top:79px;width:42px;height:19px;background:#5c5c5c;border:1px solid #333;border-bottom:none;border-radius:3px 3px 0 0"></div>
<span class="t" style="left:1087px;top:84px;width:42px;text-align:center;color:#ddd">Mod</span>
<svg class="a" style="left:0px;top:0px;" width="1" height="1" viewBox="0 0 1 1"><defs><linearGradient id="tan" x1="0" y1="0" x2="0" y2="1"><stop offset="0" stop-color="#cfc298"/><stop offset="1" stop-color="#9a8c62"/></linearGradient><radialGradient id="cone" cx=".5" cy=".3" r=".8"><stop offset="0" stop-color="#e8f4ff"/><stop offset=".5" stop-color="#7fb4e0"/><stop offset="1" stop-color="#2a5a90"/></radialGradient><radialGradient id="globe" cx=".4" cy=".35" r=".7"><stop offset="0" stop-color="#f0ead0"/><stop offset=".6" stop-color="#a89a6a"/><stop offset="1" stop-color="#3a3420"/></radialGradient></defs><path d="M47 105 h21 q2 0 2 2 v9 l-4 4 h-17 q-2 0 -2 -2 z" fill="#efefef" stroke="#888" stroke-width="0.6" /><path d="M66 120 l4 -4 h-4 z" fill="#bbb" stroke="none" stroke-width="1" /><path d="M55 116 l11 -11 l3 3 l-11 11 l-4 1 z" fill="#e8a040" stroke="#333" stroke-width="0.6" /><path d="M66 105 l3 3 l1.5 -1.5 l-3 -3 z" fill="#e05a70" stroke="none" stroke-width="1" /><rect x="44" y="120.5" width="30" height="12" rx="2" fill="#2c2c2c" stroke="none" stroke-width="0"/><rect x="79" y="120.5" width="30" height="12" rx="2" fill="#2c2c2c" stroke="none" stroke-width="0"/><line x1="94" y1="105" x2="94" y2="115" stroke="#22a022" stroke-width="2.2"/><line x1="94" y1="115" x2="85" y2="120" stroke="#3030d0" stroke-width="2.2"/><line x1="94" y1="115" x2="103" y2="120" stroke="#d02828" stroke-width="2.2"/><circle cx="94" cy="105" r="1.2" fill="#3c3" stroke="none" stroke-width="1"/><path d="M114 109 L130 105 L143 125 L121 132 z" fill="url(#tan)" stroke="#3a3218" stroke-width="0.8" /><path d="M119 108 L128 130 M124 107 L134 128 M116 116 L134 112 M118 123 L138 118" fill="none" stroke="#3a3218" stroke-width="0.6" /><path d="M122 106.5 L131 130" fill="none" stroke="#f4f020" stroke-width="1.6" /><path d="M119 110 h6 M121 116 h6 M124 124 h6" fill="none" stroke="#fff" stroke-width="1.2" /><path d="M149 115 L164 108 L178 120 L163 128 z" fill="url(#tan)" stroke="#3a3218" stroke-width="0.8" /><path d="M156 112 L170 124 M157 122 L171 114" fill="none" stroke="#3a3218" stroke-width="0.6" /><path d="M157 111 L165 108 L178 120 L171 124 z" fill="none" stroke="#ddd" stroke-width="1" /><path d="M168 117 l0 12.100000000000001 l3.3000000000000003 -3.3000000000000003 l2.75 4.95 l2.2 -1.1 l-2.75 -4.95 l4.4 0 z" fill="#a01418" stroke="#fff" stroke-width="0.6"/><path d="M184 121 L198 114 L212 120 L198 128 z" fill="url(#tan)" stroke="#3a3218" stroke-width="0.8" /><path d="M191 117 L205 124 M191 125 L205 117" fill="none" stroke="#3a3218" stroke-width="0.6" /><path d="M199 112 L205 107 L213 110 L213 123 L205 127 L199 124 z" fill="url(#tan)" stroke="#3a3218" stroke-width="0.8" /><path d="M199 112 L205 107 L213 110 L207 114 z" fill="#8cc0e6" stroke="#3a3218" stroke-width="0.6" /><circle cx="206" cy="110" r="0.8" fill="#222" stroke="none" stroke-width="1"/><path d="M220 113 L236 106 L250 113 L234 120 z" fill="none" stroke="#3a3218" stroke-width="1.8" /><path d="M222 113 L236 107 L248 113 L234 119 z" fill="none" stroke="#9a8c62" stroke-width="1" /><path d="M220 124 L236 116 L250 124 L234 132 z" fill="url(#tan)" stroke="#3a3218" stroke-width="0.8" /><path d="M228 124 L236 120 L243 124 L235 128 z" fill="#7fb7e6" stroke="none" stroke-width="1" /><circle cx="270" cy="119" r="13.5" fill="none" stroke="#c8c8c8" stroke-width="1.1"/><path d="M260 114 L270 108 L280 114 L270 120 z" fill="url(#tan)" stroke="#3a3218" stroke-width="0.7" /><path d="M260 122 L270 116 L280 122 L270 128 z" fill="url(#tan)" stroke="#3a3218" stroke-width="0.7" /><path d="M265 111 L275 117 M265 119 L275 125 M275 111 L265 117 M275 119 L265 125" fill="none" stroke="#3a3218" stroke-width="0.5" /><path d="M289 107 L303 105 L318 125 L295 133 z" fill="url(#tan)" stroke="#3a3218" stroke-width="0.8" /><path d="M303 106 L291 115 L313 119 L296 132" fill="none" stroke="#d42828" stroke-width="1.5" /><path d="M324 129 L340 120 L355 127 L345 133 z" fill="#7fb0dc" stroke="#234" stroke-width="0.5" /><path d="M332 127 L340 110 L348 127 z" fill="url(#cone)" stroke="none" stroke-width="1" /><ellipse cx="340" cy="119" rx="8" ry="3.2" fill="none" stroke="#d42828" stroke-width="1.6"/><path d="M340 119 V107" fill="none" stroke="#d42828" stroke-width="1.8" /><path d="M336.5 110 L340 104.5 L343.5 110 z" fill="#d42828" stroke="none" stroke-width="1" /><path d="M359 110 L369 106 L376 105 L388 117 L377 122 L369 125 z" fill="none" stroke="#c87a3a" stroke-width="1.6" /><path d="M367 107 L380 119 M363 116 L382 110" fill="none" stroke="#c87a3a" stroke-width="1.6" /><circle cx="359" cy="110" r="1.8" fill="#f0e820" stroke="#222" stroke-width="0.5"/><circle cx="368" cy="107" r="1.8" fill="#f0e820" stroke="#222" stroke-width="0.5"/><circle cx="376" cy="105" r="1.8" fill="#f0e820" stroke="#222" stroke-width="0.5"/><circle cx="382" cy="111" r="1.8" fill="#f0e820" stroke="#222" stroke-width="0.5"/><circle cx="388" cy="117" r="1.8" fill="#f0e820" stroke="#222" stroke-width="0.5"/><circle cx="373" cy="114" r="1.8" fill="#f0e820" stroke="#222" stroke-width="0.5"/><circle cx="363" cy="118" r="1.8" fill="#f0e820" stroke="#222" stroke-width="0.5"/><circle cx="369" cy="125" r="1.8" fill="#f0e820" stroke="#222" stroke-width="0.5"/><circle cx="378" cy="122" r="1.8" fill="#f0e820" stroke="#222" stroke-width="0.5"/><path d="M378 120 h9 l-1 10 h-7 z" fill="#777" stroke="#222" stroke-width="0.5" /><rect x="377" y="119" width="11" height="2" rx="0" fill="#999" stroke="none" stroke-width="1"/><ellipse cx="381" cy="131" rx="6" ry="1.6" fill="#111" opacity=".5"/><path d="M404 105 a10 10 0 0 0 0 20 z" fill="url(#globe)" stroke="none" stroke-width="1" /><circle cx="415" cy="123" r="10" fill="url(#globe)" stroke="#3a3218" stroke-width="0.5"/><path d="M405 123 h20 M415 113 v20 M407 118 h16 M407 128 h16" fill="none" stroke="#4a4228" stroke-width="0.6" /><ellipse cx="415" cy="123" rx="4.5" ry="10" fill="none" stroke="#4a4228" stroke-width="0.6"/></svg>
<span class="t" style="left:47px;top:122px;font-size:11.5px;color:#eaeaea;font-weight:bold;">Hist</span>
<span class="t" style="left:86px;top:122px;font-size:11.5px;color:#eaeaea;font-weight:bold;">CP</span>
<div class="a" style="left:0px;top:144px;width:44px;height:900px;background:#444"></div>
<div class="a" style="left:42px;top:144px;width:1px;height:900px;background:#373737"></div>
<div class="dots" style="left:5px;top:153px;width:35px;height:5px"></div>
<div class="a" style="left:0px;top:144px;width:1922px;height:2px;background:#383838"></div>
<div class="a" style="left:4px;top:160px;width:35px;height:35px;background:#444;border:1px solid #2d2d2d;border-radius:2px;box-shadow:inset 0 0 0 1px #505050"></div>
<div class="a" style="left:4px;top:198px;width:35px;height:35px;background:#444;border:1px solid #2d2d2d;border-radius:2px;box-shadow:inset 0 0 0 1px #505050"></div>
<div class="a" style="left:4px;top:235px;width:35px;height:35px;background:#444;border:1px solid #2d2d2d;border-radius:2px;box-shadow:inset 0 0 0 1px #505050"></div>
<div class="a" style="left:4px;top:272px;width:35px;height:35px;background:#444;border:1px solid #2d2d2d;border-radius:2px;box-shadow:inset 0 0 0 1px #505050"></div>
<div class="a" style="left:4px;top:309px;width:35px;height:35px;background:#a3a3a3;border:1px solid #2d2d2d;border-radius:2px;box-shadow:inset 0 0 0 1px #505050"></div>
<div class="a" style="left:4px;top:346px;width:35px;height:35px;background:#444;border:1px solid #2d2d2d;border-radius:2px;box-shadow:inset 0 0 0 1px #505050"></div>
<svg class="a" style="left:0px;top:0px;" width="1" height="1" viewBox="0 0 1 1"><path d="M15 168 l0 17.6 l4.800000000000001 -4.800000000000001 l4.0 7.2 l3.2 -1.6 l-4.0 -7.2 l6.4 0 z" fill="#b0141a" stroke="#fff" stroke-width="0.6"/><path d="M14 208 q4 -5 10 -2 q4 3 0 8 q-5 4 -2 10 q-4 4 -8 0 q-3 -8 0 -16" fill="none" stroke="#bbb" stroke-width="1.2" stroke-dasharray="3 2"/><path d="M25 213 l0 14.3 l3.9000000000000004 -3.9000000000000004 l3.25 5.8500000000000005 l2.6 -1.3 l-3.25 -5.8500000000000005 l5.2 0 z" fill="#b0141a" stroke="#fff" stroke-width="0.6"/><ellipse cx="21" cy="256" rx="11" ry="6" fill="none" stroke="#d11" stroke-width="2"/><path d="M19 257 l13 -14 l2 1 l-12 14 z" fill="#a07040" stroke="none" stroke-width="1" /><path d="M15 257 q3 -7 8 -5 q-1 6 -8 5" fill="#e8e0b0" stroke="none" stroke-width="1" /><rect x="12" y="250" width="3" height="3" rx="0" fill="#ee4" stroke="none" stroke-width="1"/><rect x="27" y="250" width="3" height="3" rx="0" fill="#ee4" stroke="none" stroke-width="1"/><rect x="14" y="259" width="3" height="3" rx="0" fill="#ee4" stroke="none" stroke-width="1"/><rect x="26" y="259" width="3" height="3" rx="0" fill="#ee4" stroke="none" stroke-width="1"/><path d="M22 276 l-9 20 q9 5 18 0 z" fill="#4a8ad0" stroke="#235" stroke-width="0.6" /><path d="M10 293 l18 9 l-2 -4 l5 1 l-4 4 l1 -3" fill="#d11" stroke="#d11" stroke-width="1.5" /><circle cx="22" cy="325" r="10" fill="#5b9ee0" stroke="#235" stroke-width="0.6"/><circle cx="19" cy="321" r="3.5" fill="#cfe6f8" stroke="none" stroke-width="1"/><path d="M10 330 q2 10 14 8 q10 -2 10 -8" fill="none" stroke="#d11" stroke-width="2.5" /><path d="M32 330 l3 -4 l2 5 z" fill="#d11" stroke="none" stroke-width="1" /><path d="M8 350 l7 7 M36 350 l-7 7 M8 376 l7 -7 M36 376 l-7 -7" fill="none" stroke="#d11" stroke-width="2.2" /><path d="M8 350 l6 0 l-6 6 z M36 350 l-6 0 l6 6 z M8 376 l6 0 l-6 -6 z M36 376 l-6 0 l6 -6 z" fill="#d11" stroke="none" stroke-width="1" /><path d="M15 358 l8 -4 l7 3 v9 l-8 4 l-7 -3 z" fill="#5a9ce0" stroke="#235" stroke-width="0.6" /></svg>
<div class="a" style="left:4px;top:417px;width:35px;height:35px;background:#444;border:1px solid #2d2d2d;border-radius:2px;box-shadow:inset 0 0 0 1px #505050"></div>
<svg class="a" style="left:0px;top:0px;" width="1" height="1" viewBox="0 0 1 1"><ellipse cx="24" cy="436" rx="12" ry="8" fill="none" stroke="#3b3" stroke-width="1.3" transform="rotate(-25 24 436)"/><path d="M12 432 l24 8 M14 440 l22 -8" fill="none" stroke="#c22" stroke-width="1.2" /><path d="M12 430 v-8 M12 430 l-4 4" fill="none" stroke="#3c3" stroke-width="1.2" /></svg>
<div class="a" style="left:5px;top:467px;width:33px;height:33px;background:#3f3f3f;border:1px solid #2a2a2a;border-radius:2px"></div>
<div class="a" style="left:5px;top:503px;width:33px;height:33px;background:#3f3f3f;border:1px solid #2a2a2a;border-radius:2px"></div>
<div class="a" style="left:5px;top:541px;width:33px;height:33px;background:#3f3f3f;border:1px solid #2a2a2a;border-radius:2px"></div>
<div class="a" style="left:5px;top:579px;width:33px;height:33px;background:#3f3f3f;border:1px solid #2a2a2a;border-radius:2px"></div>
<div class="a" style="left:5px;top:617px;width:33px;height:33px;background:#3f3f3f;border:1px solid #2a2a2a;border-radius:2px"></div>
<div class="a" style="left:5px;top:655px;width:33px;height:33px;background:#3f3f3f;border:1px solid #2a2a2a;border-radius:2px"></div>
<div class="a" style="left:6px;top:468px;width:31px;height:31px;background:linear-gradient(#eaeaea,#cfcfcf)"></div>
<svg class="a" style="left:0px;top:0px;" width="1" height="1" viewBox="0 0 1 1"><path d="M12 478 l9 -5 l10 5 l-9 5 z M16 476 l9 5 M26 476 l-9 5" fill="none" stroke="#333" stroke-width="0.9" /><line x1="11" y1="492" x2="11" y2="486" stroke="#3a3" stroke-width="1"/><line x1="11" y1="492" x2="16" y2="492" stroke="#c22" stroke-width="1"/></svg>
<div class="a" style="left:6px;top:504px;width:15px;height:15px;background:#e0e0e0"></div>
<div class="a" style="left:22px;top:504px;width:15px;height:15px;background:#e0e0e0"></div>
<div class="a" style="left:6px;top:520px;width:15px;height:15px;background:#e0e0e0"></div>
<div class="a" style="left:22px;top:520px;width:15px;height:15px;background:#e0e0e0"></div>
<svg class="a" style="left:0px;top:0px;" width="1" height="1" viewBox="0 0 1 1"><path d="M13 507 v10 M8 512 h10 M13 523 v10 M8 528 h10 M29 523 v10 M24 528 h10" fill="none" stroke="#333" stroke-width="1.2" /><path d="M24 511 l5 -3 l6 3 l-5 3 z" fill="none" stroke="#333" stroke-width="0.7" /></svg>
<div class="a" style="left:6px;top:542px;width:15px;height:31px;background:#2f2f2f"></div>
<div class="a" style="left:22px;top:542px;width:15px;height:31px;background:#e0e0e0"></div>
<svg class="a" style="left:0px;top:0px;" width="1" height="1" viewBox="0 0 1 1"><line x1="9" y1="546" x2="17" y2="546" stroke="#ddd" stroke-width="1"/><line x1="9" y1="550" x2="17" y2="550" stroke="#ddd" stroke-width="1"/><line x1="9" y1="554" x2="17" y2="554" stroke="#ddd" stroke-width="1"/><line x1="9" y1="558" x2="17" y2="558" stroke="#ddd" stroke-width="1"/><line x1="9" y1="562" x2="17" y2="562" stroke="#ddd" stroke-width="1"/><line x1="9" y1="566" x2="17" y2="566" stroke="#ddd" stroke-width="1"/><path d="M24 556 l5 -3 l6 3 l-5 3 z" fill="none" stroke="#333" stroke-width="0.7" /></svg>
<div class="a" style="left:6px;top:580px;width:31px;height:15px;background:#e0e0e0"></div>
<div class="a" style="left:6px;top:596px;width:31px;height:15px;background:#e8e8e8"></div>
<svg class="a" style="left:0px;top:0px;" width="1" height="1" viewBox="0 0 1 1"><path d="M14 587 l8 -4 l9 4 l-8 4 z" fill="none" stroke="#333" stroke-width="0.8" /><path d="M12 604 q5 -8 10 0 q5 8 12 -2" fill="none" stroke="#36a" stroke-width="1" /><line x1="16" y1="597" x2="16" y2="610" stroke="#c33" stroke-width="0.8"/></svg>
<div class="a" style="left:6px;top:618px;width:15px;height:31px;background:#3a3a3a"></div>
<div class="a" style="left:22px;top:618px;width:15px;height:31px;background:#e0e0e0"></div>
<svg class="a" style="left:0px;top:0px;" width="1" height="1" viewBox="0 0 1 1"><rect x="8" y="621" width="3" height="3" rx="0" fill="#999" stroke="none" stroke-width="1"/><rect x="8" y="625" width="3" height="3" rx="0" fill="#999" stroke="none" stroke-width="1"/><rect x="8" y="629" width="3" height="3" rx="0" fill="#999" stroke="none" stroke-width="1"/><rect x="12" y="621" width="3" height="3" rx="0" fill="#999" stroke="none" stroke-width="1"/><rect x="12" y="625" width="3" height="3" rx="0" fill="#999" stroke="none" stroke-width="1"/><rect x="12" y="629" width="3" height="3" rx="0" fill="#999" stroke="none" stroke-width="1"/><rect x="16" y="621" width="3" height="3" rx="0" fill="#999" stroke="none" stroke-width="1"/><rect x="16" y="625" width="3" height="3" rx="0" fill="#999" stroke="none" stroke-width="1"/><rect x="16" y="629" width="3" height="3" rx="0" fill="#999" stroke="none" stroke-width="1"/><rect x="10" y="636" width="8" height="8" rx="0" fill="#666" stroke="#ccc" stroke-width="0.6"/><path d="M24 634 l5 -3 l6 3 l-5 3 z" fill="none" stroke="#333" stroke-width="0.7" /></svg>
<div class="a" style="left:6px;top:656px;width:15px;height:15px;background:#e0e0e0"></div>
<div class="a" style="left:22px;top:656px;width:15px;height:15px;background:#3a3a3a"></div>
<div class="a" style="left:6px;top:672px;width:31px;height:15px;background:#e8e8e8"></div>
<svg class="a" style="left:0px;top:0px;" width="1" height="1" viewBox="0 0 1 1"><path d="M9 664 l5 -3 l6 3 l-5 3 z" fill="none" stroke="#333" stroke-width="0.7" /><rect x="25" y="659" width="6" height="4" rx="0" fill="none" stroke="#ee4" stroke-width="0.8"/><rect x="29" y="665" width="6" height="4" rx="0" fill="none" stroke="#ee4" stroke-width="0.8"/><path d="M12 681 q5 -8 10 0 q5 8 12 -2" fill="none" stroke="#36a" stroke-width="1" /></svg>
<div class="a" style="left:3px;top:690px;width:39px;height:316px;border:1px solid #2f2f2f;border-top:none;background:#444;box-shadow:inset 1px 0 0 #4c4c4c"></div>
<div class="a" style="left:5px;top:693px;width:33px;height:31px;background:#444;border:1px solid #2d2d2d;border-radius:2px"></div>
<svg class="a" style="left:18px;top:706px;" width="7" height="5" viewBox="0 0 7 5"><path d="M1 1 L6 1 L3.5 4 z" fill="#aaa"/></svg>
<div class="a" style="left:5px;top:1006px;width:33px;height:32px;background:linear-gradient(#5cc8c4,#1c8f8e);"></div>
<svg class="a" style="left:5px;top:1006px;" width="33" height="32" viewBox="0 0 33 32"><path d="M5 25 L5 12 L16.5 4 L28 12 L28 25 L23 25 L23 15 L16.5 20 L10 15 L10 25 z" fill="#0a4d50"/><text x="16.5" y="30" font-size="5" fill="#dff" text-anchor="middle" font-family="Liberation Sans">MAYA</text></svg>
<div class="a" style="left:44px;top:144px;width:1722px;height:44px;background:#444"></div>
<div class="a" style="left:44px;top:145px;width:1722px;height:1px;background:#393939"></div>
<span class="t" style="left:54px;top:154px;">View</span>
<span class="t" style="left:91px;top:154px;">Shading</span>
<span class="t" style="left:144px;top:154px;">Lighting</span>
<span class="t" style="left:196px;top:154px;">Show</span>
<span class="t" style="left:237px;top:154px;">Renderer</span>
<span class="t" style="left:297px;top:154px;">Panels</span>
<div class="a" style="left:50px;top:171px;width:1px;height:14px;background:#262626"></div>
<div class="a" style="left:51px;top:171px;width:1px;height:14px;background:#5a5a5a"></div>
<div class="a" style="left:49px;top:175px;width:4px;height:6px;border:1px solid #2a2a2a;border-radius:2px"></div>
<div class="a" style="left:181px;top:171px;width:1px;height:14px;background:#262626"></div>
<div class="a" style="left:182px;top:171px;width:1px;height:14px;background:#5a5a5a"></div>
<div class="a" style="left:180px;top:175px;width:4px;height:6px;border:1px solid #2a2a2a;border-radius:2px"></div>
<div class="a" style="left:333px;top:171px;width:1px;height:14px;background:#262626"></div>
<div class="a" style="left:334px;top:171px;width:1px;height:14px;background:#5a5a5a"></div>
<div class="a" style="left:332px;top:175px;width:4px;height:6px;border:1px solid #2a2a2a;border-radius:2px"></div>
<div class="a" style="left:483px;top:171px;width:1px;height:14px;background:#262626"></div>
<div class="a" style="left:484px;top:171px;width:1px;height:14px;background:#5a5a5a"></div>
<div class="a" style="left:482px;top:175px;width:4px;height:6px;border:1px solid #2a2a2a;border-radius:2px"></div>
<div class="a" style="left:575px;top:171px;width:1px;height:14px;background:#262626"></div>
<div class="a" style="left:576px;top:171px;width:1px;height:14px;background:#5a5a5a"></div>
<div class="a" style="left:574px;top:175px;width:4px;height:6px;border:1px solid #2a2a2a;border-radius:2px"></div>
<div class="a" style="left:606px;top:171px;width:1px;height:14px;background:#262626"></div>
<div class="a" style="left:607px;top:171px;width:1px;height:14px;background:#5a5a5a"></div>
<div class="a" style="left:605px;top:175px;width:4px;height:6px;border:1px solid #2a2a2a;border-radius:2px"></div>
<div class="a" style="left:189px;top:168px;width:19px;height:20px;background:#5e5e5e;border-radius:3px;box-shadow:inset 0 0 0 1px #2e2e2e"></div>
<div class="a" style="left:249px;top:168px;width:19px;height:20px;background:#5e5e5e;border-radius:3px;box-shadow:inset 0 0 0 1px #2e2e2e"></div>
<div class="a" style="left:359px;top:168px;width:20px;height:20px;background:#5e5e5e;border-radius:3px;box-shadow:inset 0 0 0 1px #2e2e2e"></div>
<div class="a" style="left:399px;top:168px;width:20px;height:20px;background:#5e5e5e;border-radius:3px;box-shadow:inset 0 0 0 1px #2e2e2e"></div>
<div class="a" style="left:612px;top:168px;width:20px;height:20px;background:#2a2a2a;border-radius:3px;box-shadow:inset 0 0 0 1px #3a3a3a"></div>
<div class="a" style="left:632px;top:168px;width:20px;height:20px;background:#2a2a2a;border-radius:3px;box-shadow:inset 0 0 0 1px #3a3a3a"></div>
<div class="a" style="left:652px;top:168px;width:21px;height:20px;background:#2a2a2a;border-radius:3px;box-shadow:inset 0 0 0 1px #3a3a3a"></div>
<svg class="a" style="left:0px;top:0px;" width="1" height="1" viewBox="0 0 1 1"><circle cx="62" cy="173" r="3.5" fill="#ccc" stroke="#222" stroke-width="0.8"/><circle cx="69" cy="173" r="3.5" fill="#ccc" stroke="#222" stroke-width="0.8"/><rect x="59" y="177" width="12" height="7" rx="0" fill="#333" stroke="#ccc" stroke-width="0.6"/><path d="M71 179 l4 -2 v6 l-4 -2" fill="#ccc" stroke="none" stroke-width="1" /><circle cx="81" cy="173" r="3" fill="#ccc" stroke="#222" stroke-width="0.8"/><circle cx="87" cy="173" r="3" fill="#ccc" stroke="#222" stroke-width="0.8"/><rect x="80" y="177" width="9" height="6" rx="0" fill="#333" stroke="#ccc" stroke-width="0.6"/><rect x="89" y="175" width="6" height="10" rx="0" fill="#eee" stroke="#555" stroke-width="0.5"/><rect x="100" y="172" width="14" height="13" rx="0" fill="#eee" stroke="#555" stroke-width="0.5"/><path d="M108 171 v13 l2 -2 l2 2 v-13 z" fill="#3a8a3a" stroke="none" stroke-width="1" /><path d="M119 181 l9 -8 l8 5 l-9 8 z" fill="#ddd" stroke="#555" stroke-width="0.6" /><path d="M122 180 l6 -5 l5 3 l-6 5 z" fill="#4a8" stroke="none" stroke-width="1" /><circle cx="127" cy="176" r="1.5" fill="#ee4" stroke="none" stroke-width="1"/><path d="M140 174 h10 M145 169 v10" fill="none" stroke="#d22" stroke-width="1.6" /><circle cx="151" cy="178" r="4" fill="#eee" stroke="#c22" stroke-width="1"/><line x1="148" y1="181" x2="142" y2="186" stroke="#c80" stroke-width="1.5"/><path d="M160 184 l10 -11 l4 3 l-10 11 z" fill="#c22" stroke="#600" stroke-width="0.5" /><path d="M160 184 l2 -4 l2 3 z" fill="#eee" stroke="none" stroke-width="1" /><rect x="191" y="171" width="15" height="14" rx="0" fill="#777" stroke="#ccc" stroke-width="0.6"/><path d="M192 178 l7 -5 l7 5 l-7 5 z" fill="none" stroke="#eee" stroke-width="1.2" /><rect x="210" y="172" width="15" height="12" rx="0" fill="#ddd" stroke="#333" stroke-width="0.6"/><rect x="212.0" y="175" width="2.2" height="6" rx="0" fill="#36a" stroke="none" stroke-width="1"/><rect x="215.5" y="175" width="2.2" height="6" rx="0" fill="#36a" stroke="none" stroke-width="1"/><rect x="219.0" y="175" width="2.2" height="6" rx="0" fill="#36a" stroke="none" stroke-width="1"/><rect x="222.5" y="175" width="2.2" height="6" rx="0" fill="#36a" stroke="none" stroke-width="1"/><rect x="230" y="172" width="15" height="13" rx="0" fill="#eee" stroke="#555" stroke-width="0.5"/><circle cx="237.5" cy="178.5" r="5.5" fill="#2d6fc0" stroke="none" stroke-width="1"/><circle cx="235.5" cy="176.5" r="2" fill="#bde" stroke="none" stroke-width="1"/><circle cx="258.5" cy="178" r="7" fill="#999" stroke="#eee" stroke-width="1.2"/><rect x="271" y="172" width="14" height="13" rx="0" fill="#444" stroke="#bbb" stroke-width="0.6"/><path d="M271 172 l14 13 M285 172 l-14 13 M278 172 v13 M271 178.5 h14" fill="none" stroke="#999" stroke-width="0.5" /><rect x="291" y="172" width="14" height="13" rx="0" fill="#ddd" stroke="#3b3" stroke-width="1.2"/><circle cx="295" cy="179" r="1.8" fill="#369" stroke="none" stroke-width="1"/><circle cx="300" cy="176" r="1.8" fill="#369" stroke="none" stroke-width="1"/><circle cx="301" cy="181" r="1.8" fill="#369" stroke="none" stroke-width="1"/><rect x="311" y="172" width="14" height="13" rx="0" fill="#eee" stroke="#3b3" stroke-width="1.2"/></svg>
<span class="t" style="left:313px;top:173px;font-size:13px;color:#111;font-weight:bold;">T</span>
<svg class="a" style="left:0px;top:0px;" width="1" height="1" viewBox="0 0 1 1"><path d="M344 175 l6 -3 l6 3 v8 l-6 3 l-6 -3 z M344 175 l6 3 l6 -3 M350 178 v8" fill="none" stroke="#ddd" stroke-width="0.8" /><path d="M362 174 l7 -3 l8 3 v9 l-8 3 l-7 -3 z" fill="#5a9ce0" stroke="#235" stroke-width="0.5" /><path d="M362 174 l7 3 l8 -3 l-8 -3 z" fill="#8cc4ee" stroke="none" stroke-width="1" /><path d="M383 175 l6 -3 l7 3 v8 l-7 3 l-6 -3 z" fill="#6aa8e4" stroke="#eee" stroke-width="0.8" /><circle cx="409" cy="178" r="7" fill="#eee" stroke="#222" stroke-width="0.6"/><path d="M403 175 h4 v3 h-4z M411 175 h4 v3 h-4z M407 178 h4 v3 h-4z M403 181 h4 v3 h-4z M411 181 h4 v3 h-4z" fill="#111" stroke="none" stroke-width="1" /><circle cx="429" cy="178" r="7" fill="url(#ylw)"/><defs><radialGradient id="ylw"><stop offset="0" stop-color="#ffff40"/><stop offset=".5" stop-color="#dada10"/><stop offset="1" stop-color="#444" stop-opacity="0"/></radialGradient><radialGradient id="gsph" cx=".4" cy=".35"><stop offset="0" stop-color="#ddd"/><stop offset="1" stop-color="#555"/></radialGradient><radialGradient id="dsph" cx=".4" cy=".35"><stop offset="0" stop-color="#999"/><stop offset="1" stop-color="#222"/></radialGradient></defs><circle cx="448" cy="176" r="6" fill="url(#gsph)" stroke="none" stroke-width="1"/><circle cx="468" cy="177" r="6.5" fill="url(#dsph)" stroke="none" stroke-width="1"/><circle cx="499" cy="175" r="5" fill="url(#gsph)" stroke="none" stroke-width="1"/><path d="M492 186 l3 -6 h9 l3 6 z" fill="#aaa" stroke="none" stroke-width="1" /><ellipse cx="520" cy="177" rx="7" ry="6" fill="url(#gsph)" opacity=".6"/><path d="M540 171 a7 7 0 0 0 0 14 z" fill="#999" stroke="none" stroke-width="1" /><path d="M541 171 l6 3 l-2 2 l3 2 l-2 2 l2 3 l-7 2 z" fill="#777" stroke="none" stroke-width="1" /><rect x="553" y="171" width="13" height="13" rx="3" fill="#777" opacity=".6"/><rect x="586" y="172" width="11" height="10" rx="0" fill="none" stroke="#3c3" stroke-width="1.2"/><path d="M591 176 l0 8.8 l2.4000000000000004 -2.4000000000000004 l2.0 3.6 l1.6 -0.8 l-2.0 -3.6 l3.2 0 z" fill="#b01818" stroke="#fff" stroke-width="0.6"/><path d="M616 174 l6 -3 l6 3 v8 l-6 3 l-6 -3 z M616 174 l6 3 l6 -3 M622 177 v8" fill="none" stroke="#ddd" stroke-width="0.9" /><rect x="635" y="175" width="9" height="9" rx="0" fill="none" stroke="#ddd" stroke-width="1"/><rect x="640" y="171" width="9" height="9" rx="0" fill="none" stroke="#ddd" stroke-width="1"/><circle cx="657" cy="178" r="2" fill="none" stroke="#eee" stroke-width="1.2"/><circle cx="667" cy="172" r="2" fill="none" stroke="#eee" stroke-width="1.2"/><circle cx="667" cy="184" r="2" fill="none" stroke="#eee" stroke-width="1.2"/><path d="M659 177 l6 -4 M659 179 l6 4" fill="none" stroke="#eee" stroke-width="1.4" /></svg>
<div class="a" style="left:46px;top:188px;width:1720px;height:855px;background:linear-gradient(#8192a7 0%,#1b1c1f 100%)"></div>
<div class="a" style="left:44px;top:188px;width:2px;height:855px;background:#2d2d2d"></div>
<svg class="a" style="left:0px;top:0px;pointer-events:none" width="1922" height="1168" viewBox="0 0 1922 1168"><defs><filter id="speck" x="0" y="0" width="1922" height="1168" filterUnits="userSpaceOnUse"><feTurbulence type="fractalNoise" baseFrequency="0.9" numOctaves="1" seed="7" result="n"/><feColorMatrix in="n" type="matrix" values="0 0 0 0 0  0 0 0 0 0  0 0 0 0 0  -14 0 0 0 6.0" result="d0"/><feColorMatrix in="d0" type="matrix" values="0 0 0 0 0  0 0 0 0 0  0 0 0 0 0  0 0 0 .45 0" result="dots"/><feComposite in="dots" in2="SourceAlpha" operator="in" result="d2"/><feMerge><feMergeNode in="SourceGraphic"/><feMergeNode in="d2"/></feMerge></filter><filter id="soft" x="-10%" y="-10%" width="120%" height="120%"><feGaussianBlur stdDeviation="1.6"/></filter><filter id="mottle" x="0" y="0" width="1922" height="1168" filterUnits="userSpaceOnUse"><feTurbulence type="fractalNoise" baseFrequency="0.09" numOctaves="2" seed="11" result="t1"/><feColorMatrix in="t1" type="matrix" values="0 0 0 0 0.72  0 0 0 0 0.40  0 0 0 0 0.14  1.4 0 0 0 -0.8" result="o1"/><feComposite in="o1" in2="SourceAlpha" operator="in" result="o2"/><feTurbulence type="fractalNoise" baseFrequency="0.1" numOctaves="2" seed="23" result="t2"/><feColorMatrix in="t2" type="matrix" values="0 0 0 0 0.16  0 0 0 0 0.48  0 0 0 0 0.58  1.4 0 0 0 -0.8" result="b1"/><feComposite in="b1" in2="SourceAlpha" operator="in" result="b2"/><feTurbulence type="fractalNoise" baseFrequency="0.9" numOctaves="1" seed="7" result="n"/><feColorMatrix in="n" type="matrix" values="0 0 0 0 0  0 0 0 0 0  0 0 0 0 0  -14 0 0 0 6.0" result="d0"/><feColorMatrix in="d0" type="matrix" values="0 0 0 0 0  0 0 0 0 0  0 0 0 0 0  0 0 0 .4 0" result="dots"/><feComposite in="dots" in2="SourceAlpha" operator="in" result="d2"/><feMerge><feMergeNode in="SourceGraphic"/><feMergeNode in="o2"/><feMergeNode in="b2"/><feMergeNode in="d2"/></feMerge></filter><clipPath id="vhead"><ellipse cx="414.5" cy="327.5" rx="76.5" ry="73.5"/></clipPath><clipPath id="vtorso"><path d="M389 458 Q388 443 414 441 Q452 442 452 458 Q450 466 446 474 L445 600 Q452 640 450 672 Q446 692 424 692 Q400 692 398 672 Q396 640 403 600 L401 474 Q392 466 389 458 z"/></clipPath><radialGradient id="vhs" cx=".46" cy=".38" r=".72" fx=".45" fy=".33"><stop offset="0" stop-color="#fff" stop-opacity=".15"/><stop offset=".3" stop-color="#000" stop-opacity="0"/><stop offset=".55" stop-color="#000" stop-opacity=".35"/><stop offset=".75" stop-color="#000" stop-opacity=".78"/><stop offset=".88" stop-color="#000" stop-opacity=".97"/></radialGradient><linearGradient id="vts" gradientUnits="userSpaceOnUse" x1="398" y1="0" x2="453" y2="0"><stop offset="0" stop-color="#000" stop-opacity=".4"/><stop offset=".25" stop-color="#000" stop-opacity="0"/><stop offset=".6" stop-color="#000" stop-opacity=".12"/><stop offset=".85" stop-color="#000" stop-opacity=".5"/><stop offset="1" stop-color="#000" stop-opacity=".8"/></linearGradient><radialGradient id="eyeb" cx=".45" cy=".3" r=".7"><stop offset="0" stop-color="#bfe6f0"/><stop offset=".45" stop-color="#3a7a90"/><stop offset="1" stop-color="#10303a" stop-opacity="0"/></radialGradient><pattern id="hatch" width="5" height="3" patternUnits="userSpaceOnUse" patternTransform="rotate(-12)"><rect width="5" height="3" fill="#949494"/><rect width="3" height="1" fill="#1a1a1a"/></pattern></defs><circle cx="414" cy="301" r="93" fill="none" stroke="#62e8b0" stroke-width="1"/><circle cx="417" cy="397" r="106" fill="none" stroke="#7ad4f4" stroke-width="1"/><path d="M366 944 L460 930 L488 965 L383 977 z" fill="url(#hatch)"/><path d="M413 937 L436 971 M374 960 L474 947" stroke="#111" stroke-width="1.2"/><g filter="url(#mottle)"><path d="M403,686 L398,760 L394,850 L393,925" fill="none" stroke="#c27630" stroke-width="11" stroke-linecap="round" stroke-linejoin="round"/><path d="M403,686 L398,760 L394,850 L393,925" fill="none" stroke="#3892ac" stroke-opacity="0.92" stroke-width="11" stroke-dasharray="28 42" stroke-dashoffset="27" stroke-linejoin="round"/><path d="M403,686 L398,760 L394,850 L393,925" fill="none" stroke="#000" stroke-opacity=".3" stroke-width="4.4" transform="translate(3.3,0)" stroke-linejoin="round"/><clipPath id="lfoot"><path d="M386 915 L400 915 Q404 950 411 975 Q402 990 393 989 Q377 987 376 975 Q384 950 386 915 z"/></clipPath><g clip-path="url(#lfoot)"><g filter="url(#soft)"><rect x="360" y="900" width="65" height="32" fill="#c27630"/><rect x="360" y="932" width="65" height="26" fill="#3892ac"/><rect x="360" y="958" width="65" height="16" fill="#c27630"/><rect x="360" y="974" width="65" height="21" fill="#3892ac"/></g></g><ellipse cx="393.5" cy="980" rx="16" ry="8" fill="#3a9ab6"/><path d="M453,684 L472,750 L489,800 L482,850 L474,890" fill="none" stroke="#c27630" stroke-width="11" stroke-linecap="round" stroke-linejoin="round"/><path d="M453,684 L472,750 L489,800 L482,850 L474,890" fill="none" stroke="#3892ac" stroke-opacity="0.92" stroke-width="11" stroke-dasharray="34 42" stroke-dashoffset="48" stroke-linejoin="round"/><path d="M453,684 L472,750 L489,800 L482,850 L474,890" fill="none" stroke="#000" stroke-opacity=".3" stroke-width="4.4" transform="translate(3.3,0)" stroke-linejoin="round"/><clipPath id="rfoot"><path d="M469 876 L479 876 Q479 900 490 922 Q505 940 520 950 Q530 958 522 966 Q505 970 480 959 Q462 948 459 936 Q461 915 469 876 z"/></clipPath><g clip-path="url(#rfoot)"><rect x="450" y="870" width="90" height="110" fill="#3892ac"/><g filter="url(#soft)"><rect x="440" y="860" width="100" height="52" fill="#c27630"/><path d="M470 945 Q495 945 515 960 L505 975 Q480 965 462 955 z" fill="#b86c2a"/><ellipse cx="485" cy="935" rx="14" ry="6" fill="#b87a3a" opacity=".5"/></g></g><g clip-path="url(#vtorso)"><g filter="url(#soft)"><rect x="370" y="440" width="110" height="25" fill="#3892ac"/><rect x="370" y="465" width="110" height="35" fill="#c27630"/><rect x="370" y="500" width="110" height="29" fill="#3892ac"/><rect x="370" y="529" width="110" height="32" fill="#c27630"/><rect x="370" y="561" width="110" height="39" fill="#3892ac"/><rect x="370" y="600" width="110" height="37" fill="#c27630"/><rect x="370" y="637" width="110" height="27" fill="#3892ac"/><rect x="370" y="664" width="110" height="36" fill="#c27630"/></g></g><path d="M395,452 L372,510 L355,562 L348,630 L341,703" fill="none" stroke="#c27630" stroke-width="9" stroke-linecap="round" stroke-linejoin="round"/><path d="M395,452 L372,510 L355,562 L348,630 L341,703" fill="none" stroke="#3892ac" stroke-opacity="0.9" stroke-width="9" stroke-dasharray="22 18" stroke-dashoffset="0" stroke-linejoin="round"/><path d="M395,452 L372,510 L355,562 L348,630 L341,703" fill="none" stroke="#000" stroke-opacity=".3" stroke-width="3.6" transform="translate(2.6999999999999997,0)" stroke-linejoin="round"/><path d="M449,452 L470,510 L486,566 L500,630 L512,693" fill="none" stroke="#c27630" stroke-width="9" stroke-linecap="round" stroke-linejoin="round"/><path d="M449,452 L470,510 L486,566 L500,630 L512,693" fill="none" stroke="#3892ac" stroke-opacity="0.9" stroke-width="9" stroke-dasharray="20 18" stroke-dashoffset="6" stroke-linejoin="round"/><path d="M449,452 L470,510 L486,566 L500,630 L512,693" fill="none" stroke="#000" stroke-opacity=".3" stroke-width="3.6" transform="translate(2.6999999999999997,0)" stroke-linejoin="round"/><path d="M414,398 L416,420 L417,446" fill="none" stroke="#c27630" stroke-width="9" stroke-linecap="round" stroke-linejoin="round"/><path d="M414,398 L416,420 L417,446" fill="none" stroke="#3892ac" stroke-opacity="1" stroke-width="9" stroke-dasharray="14 12" stroke-dashoffset="0" stroke-linejoin="round"/><path d="M414,398 L416,420 L417,446" fill="none" stroke="#000" stroke-opacity=".3" stroke-width="3.6" transform="translate(2.6999999999999997,0)" stroke-linejoin="round"/><ellipse cx="333" cy="359" rx="12.5" ry="10.5" fill="#b07028"/><ellipse cx="336" cy="360" rx="7.5" ry="6.5" fill="#2a3e3c"/><ellipse cx="338" cy="361" rx="4" ry="4" fill="#4a6a60"/><ellipse cx="498" cy="358" rx="12.5" ry="10.5" fill="#b07028"/><ellipse cx="495" cy="359" rx="7.5" ry="6.5" fill="#2a3e3c"/><ellipse cx="493" cy="360" rx="4" ry="4" fill="#4a6a60"/><g clip-path="url(#vhead)"><g filter="url(#soft)"><rect x="320" y="250" width="190" height="22" fill="#c27630"/><rect x="320" y="272" width="190" height="25" fill="#3892ac"/><rect x="320" y="297" width="190" height="24" fill="#c27630"/><rect x="320" y="321" width="190" height="29" fill="#3892ac"/><rect x="320" y="350" width="190" height="26" fill="#c27630"/><rect x="320" y="376" width="190" height="26" fill="#3892ac"/></g></g></g><rect x="380" y="440" width="90" height="260" fill="url(#vts)" clip-path="url(#vtorso)"/><defs><linearGradient id="hgv" x1="0" x2="1"><stop offset="0" stop-color="#b07028"/><stop offset=".45" stop-color="#d09040"/><stop offset="1" stop-color="#8a5a20"/></linearGradient></defs><path d="M335 700 L348 700 Q352 720 358 735 Q366 745 364 751 Q356 749 352 740 Q356 760 361 782 Q357 789 350 781 Q340 771 335 756 Q327 735 332 715 z" fill="url(#hgv)" filter="url(#speck)"/><path d="M505 688 L519 688 Q523 712 523 735 Q521 752 517 764 Q511 768 507 760 Q502 766 496 760 Q500 745 505 738 Q499 732 500 720 z" fill="url(#hgv)" filter="url(#speck)"/><path d="M340 720 Q346 750 352 778 M346 718 Q352 745 358 770 M512 700 Q515 730 510 760 M518 705 Q518 735 516 760" stroke="#6a4318" stroke-opacity=".5" stroke-width="1" fill="none"/><rect x="380" y="320" width="62" height="36" rx="14" fill="#22586e" opacity=".6" filter="url(#soft)"/><ellipse cx="414.5" cy="327.5" rx="76.5" ry="73.5" fill="url(#vhs)"/><ellipse cx="398" cy="339" rx="7" ry="6" fill="url(#eyeb)"/><ellipse cx="421" cy="339" rx="7" ry="6" fill="url(#eyeb)"/><ellipse cx="399" cy="343" rx="3" ry="2.2" fill="#0c0c0c"/><ellipse cx="422" cy="343" rx="3" ry="2.2" fill="#0c0c0c"/><ellipse cx="410.5" cy="384.5" rx="10" ry="4" fill="#121212"/><ellipse cx="412" cy="386.5" rx="6.5" ry="1.8" fill="#4a7a90"/><circle cx="420" cy="493" r="13" fill="none" stroke="#d8c8a0" stroke-opacity=".5" stroke-width="1.2"/><path d="M331.5 364.5 A92 92 0 0 0 418.0 488.0" fill="none" stroke="#111" stroke-width="1.3" stroke-dasharray="1.5 2"/><path d="M418.0 488.0 A92 92 0 0 0 469.4 319.7" fill="none" stroke="#4ae04a" stroke-width="1.3" stroke-dasharray="1.5 2"/><path d="M325.2 344.0 A106 106 0 0 1 508.8 344.0" fill="none" stroke="#9ad8f0" stroke-width="1" stroke-dasharray="1.2 1.8" clip-path="url(#vhead)"/><path d="M325 396 L511 396" stroke="#e8e820" stroke-width="1.6"/><path d="M415 306 L414 400 L418 445 L421 480" stroke="#1a20e0" stroke-width="1.6" fill="none"/><path d="M395 458 L452 458 M421 452 v6" stroke="#1a20e0" stroke-width="1.6"/><ellipse cx="427" cy="563" rx="25" ry="2.5" fill="none" stroke="#1a20e0" stroke-width="1.4"/><ellipse cx="426" cy="662" rx="40" ry="6" fill="none" stroke="#1a20e0" stroke-width="1.4"/><path d="M306 664 L502 652 L548 672 L463 691 L336 688 z" fill="none" stroke="#e8e820" stroke-width="1.2"/><path d="M380 435 L336 480 L327 479 L327 503 L357 496 L349 495 L394 446" fill="none" stroke="#e01818" stroke-width="1.2"/><path d="M450 440 L476 483 L485 485 L480 507 L457 500 L466 497" fill="none" stroke="#e01818" stroke-width="1.2"/><path d="M384 671 L384 767 L371 767 L395 797 L420 767 L409 767 L409 671" fill="none" stroke="#e01818" stroke-width="1.2"/><path d="M453 671 L483 759 L474 763 L504 782 L512 744 L502 747 L474 663" fill="none" stroke="#e01818" stroke-width="1.2"/><path d="M374 960 L363 987 L427 998 L420 972" fill="none" stroke="#e01818" stroke-width="1.2"/><path d="M466 967 L493 986 L515 967" fill="none" stroke="#e01818" stroke-width="1.2"/><ellipse cx="345" cy="698" rx="10" ry="3" fill="none" stroke="#e01818" stroke-width="1" transform="rotate(-20 345 698)"/><ellipse cx="515" cy="683" rx="10" ry="3" fill="none" stroke="#e01818" stroke-width="1" transform="rotate(10 515 683)"/><path d="M312 750 L330 752 M313 747 L313 752 M522 728 L540 727 M535 727 L535 731 M526 692 L530 690 M336 715 L341 710" stroke="#22e022" stroke-width="1.6"/><ellipse cx="425.5" cy="963.5" rx="216" ry="75.5" fill="none" stroke="#7040b0" stroke-width="1"/><path d="M71 1001 V1016 H80" fill="none" stroke="#3c3" stroke-width="1"/><path d="M71 1016 H80" stroke="#d22" stroke-width="1"/><path d="M71 1016 L76 1013" stroke="#33f" stroke-width="1"/><text x="68" y="998" font-size="9" fill="#3d3" font-family="Liberation Sans" font-weight="bold">y</text><text x="81" y="1014" font-size="9" fill="#e22" font-family="Liberation Sans" font-weight="bold">x</text></svg>
<div class="a" style="left:1766px;top:73px;width:156px;height:260px;background:#444"></div>
<svg class="a" style="left:0px;top:0px;" width="1" height="1" viewBox="0 0 1 1"><path d="M1905 82 h10 l-1 12 h-8 z" fill="#888" stroke="#333" stroke-width="0.6" /><rect x="1903" y="80" width="14" height="2" rx="0" fill="#999" stroke="none" stroke-width="1"/><ellipse cx="1908" cy="95" rx="6" ry="2" fill="#222" opacity=".5"/></svg>
<div class="a" style="left:1766px;top:98px;width:152px;height:45px;background:#404040;border:1px solid #353535;border-radius:3px;box-shadow:inset 0 0 0 1px #4a4a4a"></div>
<div class="a" style="left:1766px;top:145px;width:156px;height:188px;background:#444"></div>
<div class="dots" style="left:1772px;top:153px;width:96px;height:5px"></div>
<div class="a" style="left:1870px;top:149px;width:12px;height:13px;background:#3a3a3a;border:1px solid #222;border-radius:2px"></div>
<svg class="a" style="left:0px;top:0px;" width="1" height="1" viewBox="0 0 1 1"><rect x="1873" y="154" width="5" height="5" rx="0" fill="none" stroke="#111" stroke-width="1"/><rect x="1875" y="152" width="5" height="5" rx="0" fill="none" stroke="#111" stroke-width="1"/></svg>
<div class="a" style="left:1885px;top:149px;width:12px;height:13px;background:#3a3a3a;border:1px solid #222;border-radius:2px"></div>
<svg class="a" style="left:0px;top:0px;" width="1" height="1" viewBox="0 0 1 1"><path d="M1888 152 l6 7 M1894 152 l-6 7" fill="none" stroke="#111" stroke-width="1.2" /></svg>
<div class="a" style="left:1898px;top:148px;width:17px;height:170px;background:#3a3a3a;border:1px solid #333;border-radius:3px"></div>
<span class="t" style="left:1900px;top:158px;writing-mode:vertical-rl;font-size:11px;color:#c8c8c8">Channel Box / Layer Editor</span>
<div class="a" style="left:1897px;top:318px;width:20px;height:20px;background:#555;border-radius:3px"></div>
<span class="t" style="left:1902px;top:322px;writing-mode:vertical-rl;font-size:11px;color:#ccc">At</span>
<div class="a" style="left:1766px;top:199px;width:126px;height:42px;border:1px solid #363636;border-radius:3px"></div>
<div class="a" style="left:1766px;top:208px;width:96px;height:18px;background:#383838"></div>
<span class="t" style="left:1770px;top:212px;color:#c8c8c8;">Head_FKShapeOrig</span>
<div class="a" style="left:1862px;top:207px;width:12px;height:19px;background:#555;border-radius:2px"></div>
<div class="a" style="left:1877px;top:207px;width:13px;height:19px;background:#5c5c5c;border-radius:2px"></div>
<svg class="a" style="left:0px;top:0px;" width="1" height="1" viewBox="0 0 1 1"><path d="M1871 211 v10 l-6 -5 z" fill="#222" stroke="none" stroke-width="1" /><path d="M1880 211 v10 l6 -5 z" fill="#ccc" stroke="none" stroke-width="1" /></svg>
<div class="a" style="left:1766px;top:256px;width:16px;height:20px;background:#333;border-radius:3px"></div>
<svg class="a" style="left:0px;top:0px;" width="1" height="1" viewBox="0 0 1 1"><path d="M1800 251 h9 v11 h-9 M1796 254 l5 3 l-5 3 z" fill="none" stroke="#111" stroke-width="1" /><path d="M1796 254 l5 3 l-5 3 z" fill="#111" stroke="none" stroke-width="1" /><path d="M1811 273 h-9 v11 h9 M1807 276 l5 3 l-5 3 z" fill="none" stroke="#111" stroke-width="1" /><path d="M1807 276 l5 3 l-5 3 z" fill="#111" stroke="none" stroke-width="1" /></svg>
<div class="btn" style="left:1825px;top:236px;width:67px;height:19px;line-height:19px">Focus</div>
<div class="btn" style="left:1825px;top:258px;width:67px;height:19px;line-height:19px;color:#8a8a8a;background:#4a4a4a">Presets</div>
<div class="btn" style="left:1825px;top:281px;width:33px;height:18px;line-height:18px;color:#8a8a8a;background:#4a4a4a">Show</div>
<div class="btn" style="left:1861px;top:281px;width:31px;height:18px;line-height:18px">Hide</div>
<div class="a" style="left:1766px;top:307px;width:128px;height:20px;border:1px solid #363636;border-radius:3px"></div>
<div class="a" style="left:1766px;top:313px;width:125px;height:14px;border:1px solid #2a2a2a;border-radius:2px"></div>
<div class="a" style="left:1919px;top:21px;width:3px;height:322px;background:#2a2a2a"></div>
<div class="a" style="left:0px;top:1043px;width:1922px;height:125px;background:#444"></div>
<div class="a" style="left:0px;top:1043px;width:1922px;height:4px;background:#3a3a3a"></div>
<div class="dots" style="left:6px;top:1049px;width:6px;height:28px"></div>
<div class="a" style="left:13px;top:1048px;width:1909px;height:30px;background:#2b2b2b"></div>
<div class="a" style="left:22px;top:1049px;width:67px;height:28px;background:#232323"></div>
<div class="a" style="left:13px;top:1077px;width:1909px;height:2px;background:#4f4f4f"></div>
<div class="a" style="left:22px;top:1062px;width:1px;height:15px;background:#6a6a6a"></div>
<span class="t" style="left:34px;top:1051px;color:#8e8e8e;">1</span>
<div class="a" style="left:88px;top:1062px;width:1px;height:15px;background:#6a6a6a"></div>
<span class="t" style="left:100px;top:1051px;color:#8e8e8e;">2</span>
<div class="a" style="left:154px;top:1062px;width:1px;height:15px;background:#6a6a6a"></div>
<span class="t" style="left:166px;top:1051px;color:#8e8e8e;">3</span>
<div class="a" style="left:220px;top:1062px;width:1px;height:15px;background:#6a6a6a"></div>
<span class="t" style="left:232px;top:1051px;color:#8e8e8e;">4</span>
<div class="a" style="left:286px;top:1062px;width:1px;height:15px;background:#6a6a6a"></div>
<span class="t" style="left:298px;top:1051px;color:#8e8e8e;">5</span>
<div class="a" style="left:352px;top:1062px;width:1px;height:15px;background:#6a6a6a"></div>
<span class="t" style="left:364px;top:1051px;color:#8e8e8e;">6</span>
<div class="a" style="left:419px;top:1062px;width:1px;height:15px;background:#6a6a6a"></div>
<span class="t" style="left:431px;top:1051px;color:#8e8e8e;">7</span>
<div class="a" style="left:485px;top:1062px;width:1px;height:15px;background:#6a6a6a"></div>
<span class="t" style="left:497px;top:1051px;color:#8e8e8e;">8</span>
<div class="a" style="left:551px;top:1062px;width:1px;height:15px;background:#6a6a6a"></div>
<span class="t" style="left:563px;top:1051px;color:#8e8e8e;">9</span>
<div class="a" style="left:617px;top:1062px;width:1px;height:15px;background:#6a6a6a"></div>
<span class="t" style="left:629px;top:1051px;color:#8e8e8e;">10</span>
<div class="a" style="left:683px;top:1062px;width:1px;height:15px;background:#6a6a6a"></div>
<span class="t" style="left:695px;top:1051px;color:#8e8e8e;">11</span>
<span class="t" style="left:34px;top:1066px;color:#ffffff;">1</span>
<div class="dots" style="left:6px;top:1087px;width:6px;height:20px"></div>
<div class="a" style="left:14px;top:1086px;width:68px;height:21px;background:#2b2b2b;border-radius:3px;box-shadow:0 0 0 1px #383838"></div>
<span class="t" style="left:19px;top:1093px;color:#e0e0e0;">1.00</span>
<div class="a" style="left:86px;top:1086px;width:68px;height:21px;background:#2b2b2b;border-radius:3px;box-shadow:0 0 0 1px #383838"></div>
<span class="t" style="left:91px;top:1093px;color:#e0e0e0;">1.00</span>
<div class="a" style="left:157px;top:1086px;width:1765px;height:22px;background:#2e2e2e"></div>
<div class="a" style="left:165px;top:1089px;width:1757px;height:16px;background:#676767"></div>
<div class="a" style="left:170px;top:1091px;width:11px;height:12px;background:#5e5e5e;border-right:1px solid #222;border-bottom:1px solid #222"></div>
<span class="t" style="left:184px;top:1093px;color:#e8e8e8;">1</span>
<div class="dots" style="left:6px;top:1115px;width:6px;height:23px"></div>
<span class="t" style="left:25px;top:1123px;color:#d8d8d8;">MEL</span>
<div class="a" style="left:59px;top:1115px;width:1863px;height:23px;background:#2b2b2b;border-radius:3px 0 0 3px;box-shadow:0 0 0 1px #3a3a3a"></div>
<div class="dots" style="left:6px;top:1147px;width:6px;height:20px"></div>
<div class="a" style="left:13px;top:1145px;width:1909px;height:23px;background:linear-gradient(#383838,#444);border:1px solid #505050;border-right:none;border-bottom:none"></div>
<span class="t" style="left:26px;top:1152px;font-size:10.2px;color:#d2d2d2;">Rotate Tool: Use manipulator to rotate object(s). Use edit mode to change pivot (INSERT).</span>
<div class="a" style="left:18px;top:1164px;width:30px;height:8px;background:radial-gradient(ellipse at 50% 100%,#eee 0,#bbb 50%,rgba(0,0,0,0) 70%)"></div>
<div class="a" style="left:677px;top:323px;width:1245px;height:822px;background:linear-gradient(90deg,#737e8a,#76818c 30%,#6d7782 52%,#5a6068 80%,#4c4e51 90%,#48494b);border-radius:7px 0 0 7px;box-shadow:0 0 0 1px #2a2e33"></div>
<div class="a" style="left:678px;top:324px;width:1244px;height:1px;background:#c5cbd1"></div>
<div class="a" style="left:678px;top:323px;width:1px;height:820px;background:#b7bec5;border-radius:7px 0 0 7px"></div>
<div class="a" style="left:681px;top:324px;width:128px;height:26px;background:radial-gradient(closest-side,rgba(225,228,232,.95) 0%,rgba(205,210,215,.8) 60%,rgba(120,130,140,0) 100%)"></div>
<svg class="a" style="left:684px;top:328px;" width="16" height="17" viewBox="0 0 16 17"><defs><linearGradient id="mg684_328" x1="0" y1="0" x2="1" y2="1"><stop offset="0" stop-color="#9ee4dc"/><stop offset=".35" stop-color="#3fb4ae"/><stop offset="1" stop-color="#0f7a7a"/></linearGradient></defs><rect x="0" y="0" width="16" height="17" fill="url(#mg684_328)"/><path d="M1.92 13.26 L1.92 6.46 L8.0 1.7000000000000002 L14.08 6.46 L14.08 13.26 L11.2 13.26 L11.2 8.5 L8.0 12.24 L4.8 8.5 L4.8 13.26 z" fill="#0b4c52"/><path d="M8.0 1.7000000000000002 L8.0 12.24" stroke="#2a8a8a" stroke-width="1.28"/><rect x="2.4" y="13.94" width="11.2" height="1.7000000000000002" fill="#bdeee8" opacity=".8"/></svg>
<span class="t" style="left:705px;top:332px;font-size:12px;color:#000;">Render View</span>
<div class="a" style="left:1880px;top:323px;width:42px;height:22px;border:1px solid #8a8a8a;border-top:none;border-right:none;border-radius:0 0 0 4px;background:linear-gradient(#5a5a5a,#3e3e3e)"></div>
<div class="a" style="left:1885px;top:333px;width:13px;height:4px;background:#f0f0f0"></div>
<div class="a" style="left:1906px;top:329px;width:14px;height:10px;border:2px solid #f0f0f0"></div>
<div class="a" style="left:682px;top:350px;width:1240px;height:795px;background:#444;border:1px solid #c0c4c8;border-right:none;border-bottom:none"></div>
<div class="a" style="left:683px;top:1138px;width:1239px;height:1px;background:#c8c8c8"></div>
<div class="a" style="left:683px;top:1143px;width:1239px;height:2px;background:#bcbcbc"></div>
<div class="a" style="left:683px;top:1136px;width:1239px;height:2px;background:#4c4c4c"></div>
<span class="t" style="left:693px;top:359px;">File</span>
<span class="t" style="left:724px;top:359px;">View</span>
<span class="t" style="left:761px;top:359px;">Render</span>
<span class="t" style="left:811px;top:359px;">IPR</span>
<span class="t" style="left:843px;top:359px;">Options</span>
<span class="t" style="left:895px;top:359px;">Display</span>
<span class="t" style="left:944px;top:359px;">Render Target</span>
<span class="t" style="left:1028px;top:359px;">Help</span>
<div class="a" style="left:771px;top:376px;width:1px;height:22px;background:#262626"></div>
<div class="a" style="left:772px;top:376px;width:1px;height:22px;background:#5a5a5a"></div>
<div class="a" style="left:828px;top:376px;width:1px;height:22px;background:#262626"></div>
<div class="a" style="left:829px;top:376px;width:1px;height:22px;background:#5a5a5a"></div>
<div class="a" style="left:858px;top:376px;width:1px;height:22px;background:#262626"></div>
<div class="a" style="left:859px;top:376px;width:1px;height:22px;background:#5a5a5a"></div>
<div class="a" style="left:943px;top:376px;width:1px;height:22px;background:#262626"></div>
<div class="a" style="left:944px;top:376px;width:1px;height:22px;background:#5a5a5a"></div>
<div class="a" style="left:1001px;top:376px;width:1px;height:22px;background:#262626"></div>
<div class="a" style="left:1002px;top:376px;width:1px;height:22px;background:#5a5a5a"></div>
<div class="a" style="left:1130px;top:376px;width:1px;height:22px;background:#262626"></div>
<div class="a" style="left:1131px;top:376px;width:1px;height:22px;background:#5a5a5a"></div>
<svg class="a" style="left:0px;top:0px;" width="1" height="1" viewBox="0 0 1 1"><path d="M694 384 L708 384 L708 393 L694 393 z" fill="#9a9a9a" stroke="#222" stroke-width="0.7" transform="rotate(8 701 388)"/><path d="M694 383 L707 377 L708.5 380 L695 386 z" fill="#f0f0f0" stroke="#222" stroke-width="0.7"/><path d="M697 381.5 l1.5 3 M701 379.7 l1.5 3 M705 378 l1.5 3" stroke="#222" stroke-width="1.3"/><rect x="717.5" y="380.5" width="18" height="16" rx="0" fill="none" stroke="#d22" stroke-width="1"/><path d="M720 387 L734 387 L734 396 L720 396 z" fill="#9a9a9a" stroke="#222" stroke-width="0.7" transform="rotate(8 727 391)"/><path d="M720 386 L733 380 L734.5 383 L721 389 z" fill="#f0f0f0" stroke="#222" stroke-width="0.7"/><path d="M723 384.5 l1.5 3 M727 382.7 l1.5 3 M731 381 l1.5 3" stroke="#222" stroke-width="1.3"/><rect x="745" y="380" width="16" height="11" rx="0" fill="#ddd" stroke="#333" stroke-width="0.6"/><circle cx="753" cy="386" r="3.5" fill="#333" stroke="#bbb" stroke-width="0.8"/><rect x="749" y="378" width="4" height="2" rx="0" fill="#222" stroke="none" stroke-width="1"/><circle cx="747" cy="382" r="0.8" fill="#3c3" stroke="none" stroke-width="1"/><path d="M781 384 L795 384 L795 393 L781 393 z" fill="#aaa" stroke="#222" stroke-width="0.7" transform="rotate(8 788 388)"/><path d="M781 383 L794 377 L795.5 380 L782 386 z" fill="#f0f0f0" stroke="#222" stroke-width="0.7"/><path d="M784 381.5 l1.5 3 M788 379.7 l1.5 3 M792 378 l1.5 3" stroke="#222" stroke-width="1.3"/><path d="M803 386 a8 8 0 1 1 3 6" fill="none" stroke="#aaa" stroke-width="2.4" /><path d="M801 389 l4 5 l3 -5 z" fill="#aaa" stroke="none" stroke-width="1" /><circle cx="837" cy="381" r="2" fill="none" stroke="#ddd" stroke-width="1"/><circle cx="837" cy="391" r="2" fill="none" stroke="#ddd" stroke-width="1"/><path d="M841 385 L855 385 L855 394 L841 394 z" fill="#aaa" stroke="#222" stroke-width="0.7" transform="rotate(8 848 389)"/><path d="M841 384 L854 378 L855.5 381 L842 387 z" fill="#f0f0f0" stroke="#222" stroke-width="0.7"/><path d="M844 382.5 l1.5 3 M848 380.7 l1.5 3 M852 379 l1.5 3" stroke="#222" stroke-width="1.3"/></svg>
<div class="a" style="left:864px;top:377px;width:20px;height:19px;background:#000"></div>
<svg class="a" style="left:0px;top:0px;" width="1" height="1" viewBox="0 0 1 1"><defs><clipPath id="rgbc"><circle cx="874" cy="386.5" r="9"/></clipPath></defs><g clip-path="url(#rgbc)"><rect x="864" y="377" width="7" height="20" fill="#d42020"/><rect x="871" y="377" width="6" height="20" fill="#1a8a2a"/><rect x="877" y="377" width="8" height="20" fill="#2430e0"/></g></svg>
<div class="a" style="left:891px;top:377px;width:19px;height:19px;background:#3a3a3a"></div>
<svg class="a" style="left:0px;top:0px;" width="1" height="1" viewBox="0 0 1 1"><circle cx="900.5" cy="386.5" r="9" fill="#6c6c6c" stroke="none" stroke-width="1"/><line x1="900.5" y1="377.5" x2="900.5" y2="395.5" stroke="#5a5a5a" stroke-width="0.8"/><line x1="891.5" y1="386.5" x2="909.5" y2="386.5" stroke="#5a5a5a" stroke-width="0.8"/></svg>
<span class="t" style="left:918px;top:380px;font-size:15px;color:#d8d8d8;font-weight:bold;">1:1</span>
<svg class="a" style="left:0px;top:0px;" width="1" height="1" viewBox="0 0 1 1"><rect x="950.5" y="378.5" width="17" height="17" rx="0" fill="none" stroke="#2c2" stroke-width="1.4"/><rect x="954" y="382" width="10" height="10" rx="0" fill="#118a3a" stroke="#eee" stroke-width="1.2"/><path d="M955 391 l8 -8" fill="none" stroke="#ee4" stroke-width="1.6" /><rect x="976" y="378" width="11" height="11" rx="0" fill="#118a3a" stroke="#eee" stroke-width="1.2"/><path d="M978 387 l7 -7" fill="none" stroke="#ee4" stroke-width="1.4" /><path d="M983 385 h10 l-1 11 h-8 z" fill="#777" stroke="#222" stroke-width="0.6" /></svg>
<div class="a" style="left:1004px;top:375px;width:123px;height:24px;background:linear-gradient(#5a5a5a,#4d4d4d);border:1px solid #2b2b2b;border-radius:4px"></div>
<div class="a" style="left:1110px;top:376px;width:1px;height:22px;background:#3a3a3a"></div>
<span class="t" style="left:1008px;top:382px;font-size:12px;color:#c8c8c8;">mental ray</span>
<svg class="a" style="left:1114px;top:383px;" width="10" height="7" viewBox="0 0 10 7"><path d="M1 1 L9 1 L5 6 z" fill="#cfcfcf"/></svg>
<svg class="a" style="left:0px;top:0px;" width="1" height="1" viewBox="0 0 1 1"><path d="M1137 392 l9 -4 l9 4 l-9 4 z" fill="#999" stroke="#555" stroke-width="0.5" /><path d="M1140 385 L1154 385 L1154 394 L1140 394 z" fill="#999" stroke="#222" stroke-width="0.7" transform="rotate(8 1147 389)"/><path d="M1140 384 L1153 378 L1154.5 381 L1141 387 z" fill="#f0f0f0" stroke="#222" stroke-width="0.7"/><path d="M1143 382.5 l1.5 3 M1147 380.7 l1.5 3 M1151 379 l1.5 3" stroke="#222" stroke-width="1.3"/></svg>
<div class="a" style="left:1885px;top:381px;width:4px;height:12px;background:linear-gradient(90deg,#888,#ddd)"></div>
<div class="a" style="left:1891px;top:381px;width:4px;height:12px;background:linear-gradient(90deg,#888,#ddd)"></div>
<span class="t" style="left:1903px;top:383px;color:#8a8a8a;">IPR</span>
<div class="a" style="left:683px;top:401px;width:1239px;height:7px;background:#2a2a2a"></div>
<div class="a" style="left:683px;top:408px;width:9px;height:728px;background:#2b2b2b"></div>
<div class="a" style="left:692px;top:408px;width:1230px;height:721px;background:#fff"></div>
<div class="a" style="left:683px;top:1129px;width:1239px;height:7px;background:#2b2b2b"></div>
<span class="t" style="left:1212px;top:1103px;color:#c4c4c4;font-weight:bold;">size: 1280 x 720 zoom: 1.000</span>
<span class="t" style="left:1385px;top:1103px;color:#c4c4c4;font-weight:bold;">(mental ray)</span>
<span class="t" style="left:1183px;top:1119px;color:#c4c4c4;font-weight:bold;">Frame: 1</span>
<span class="t" style="left:1254px;top:1119px;color:#c4c4c4;font-weight:bold;">Render Time: 0:05</span>
<span class="t" style="left:1376px;top:1119px;color:#c4c4c4;font-weight:bold;">Camera: persp</span>
<svg class="a" style="left:0px;top:0px;pointer-events:none" width="1922" height="1168" viewBox="0 0 1922 1168"><defs><clipPath id="rhead"><ellipse cx="1174" cy="514.5" rx="68" ry="67"/></clipPath><clipPath id="rtorso"><path d="M1148 640 Q1148 619 1175 618 Q1203 619 1203 640 Q1200 648 1197 655 L1198 780 Q1200 820 1196 832 Q1185 842 1172 841 Q1154 840 1152 830 Q1150 800 1158 770 L1157 655 Q1150 648 1148 640 z"/></clipPath><radialGradient id="rhs" cx=".36" cy=".3" r=".85" fx=".33" fy=".28"><stop offset="0" stop-color="#fff" stop-opacity=".1"/><stop offset=".38" stop-color="#000" stop-opacity="0"/><stop offset=".62" stop-color="#000" stop-opacity=".45"/><stop offset=".8" stop-color="#000" stop-opacity=".9"/><stop offset="1" stop-color="#000" stop-opacity="1"/></radialGradient><linearGradient id="rts" gradientUnits="userSpaceOnUse" x1="1150" y1="0" x2="1204" y2="0"><stop offset="0" stop-color="#000" stop-opacity=".15"/><stop offset=".3" stop-color="#000" stop-opacity="0"/><stop offset=".6" stop-color="#000" stop-opacity=".3"/><stop offset=".85" stop-color="#000" stop-opacity=".85"/><stop offset="1" stop-color="#000" stop-opacity=".95"/></linearGradient><linearGradient id="rtb" x1="0" y1="0" x2="0" y2="1"><stop offset="0" stop-color="#000" stop-opacity="0"/><stop offset=".6" stop-color="#000" stop-opacity=".25"/><stop offset="1" stop-color="#000" stop-opacity=".85"/></linearGradient></defs><g filter="url(#mottle)"><path d="M1158,836 L1154,900 L1150,980 L1148,1040" fill="none" stroke="#c27630" stroke-width="11" stroke-linecap="round" stroke-linejoin="round"/><path d="M1158,836 L1154,900 L1150,980 L1148,1040" fill="none" stroke="#3892ac" stroke-opacity="0.85" stroke-width="11" stroke-dasharray="34 26" stroke-dashoffset="8" stroke-linejoin="round"/><path d="M1158,836 L1154,900 L1150,980 L1148,1040" fill="none" stroke="#000" stroke-opacity=".3" stroke-width="4.4" transform="translate(3.3,0)" stroke-linejoin="round"/><path d="M1142 1040 L1154 1040 Q1160 1070 1170 1095 Q1172 1108 1155 1109 Q1138 1108 1139 1095 Q1143 1070 1142 1040 z" fill="#c27630"/><ellipse cx="1155" cy="1101" rx="16" ry="8" fill="#3892ac"/><path d="M1193,833 L1212,890 L1233,938 L1224,990 L1216,1040" fill="none" stroke="#c27630" stroke-width="10" stroke-linecap="round" stroke-linejoin="round"/><path d="M1193,833 L1212,890 L1233,938 L1224,990 L1216,1040" fill="none" stroke="#3892ac" stroke-opacity="0.85" stroke-width="10" stroke-dasharray="36 26" stroke-dashoffset="14" stroke-linejoin="round"/><path d="M1193,833 L1212,890 L1233,938 L1224,990 L1216,1040" fill="none" stroke="#000" stroke-opacity=".3" stroke-width="4.0" transform="translate(3.0,0)" stroke-linejoin="round"/><path d="M1207 1040 L1221 1040 Q1228 1058 1250 1070 Q1272 1080 1262 1088 Q1245 1092 1225 1082 Q1202 1072 1204 1060 z" fill="#3892ac"/><path d="M1212 1062 Q1232 1075 1252 1082 L1244 1089 Q1222 1082 1210 1072 z" fill="#c27630" opacity=".85"/><g clip-path="url(#rtorso)"><g filter="url(#soft)"><rect x="1130" y="612" width="90" height="60" fill="#3892ac"/><rect x="1130" y="672" width="90" height="33" fill="#c27630"/><rect x="1130" y="705" width="90" height="43" fill="#3892ac"/><rect x="1130" y="748" width="90" height="47" fill="#c27630"/><rect x="1130" y="795" width="90" height="25" fill="#3892ac"/><rect x="1130" y="820" width="90" height="28" fill="#c27630"/></g></g><path d="M1152,640 L1134,690 L1115,736 L1108,857" fill="none" stroke="#c27630" stroke-width="7" stroke-linecap="round" stroke-linejoin="round"/><path d="M1152,640 L1134,690 L1115,736 L1108,857" fill="none" stroke="#3892ac" stroke-opacity="0.85" stroke-width="7" stroke-dasharray="22 20" stroke-dashoffset="2" stroke-linejoin="round"/><path d="M1152,640 L1134,690 L1115,736 L1108,857" fill="none" stroke="#000" stroke-opacity=".3" stroke-width="2.8000000000000003" transform="translate(2.1,0)" stroke-linejoin="round"/><path d="M1199,640 L1213,685 L1228,724 L1252,845" fill="none" stroke="#c27630" stroke-width="7" stroke-linecap="round" stroke-linejoin="round"/><path d="M1199,640 L1213,685 L1228,724 L1252,845" fill="none" stroke="#3892ac" stroke-opacity="0.85" stroke-width="7" stroke-dasharray="22 18" stroke-dashoffset="6" stroke-linejoin="round"/><path d="M1199,640 L1213,685 L1228,724 L1252,845" fill="none" stroke="#000" stroke-opacity=".3" stroke-width="2.8000000000000003" transform="translate(2.1,0)" stroke-linejoin="round"/><path d="M1175,575 L1175,600 L1175,622" fill="none" stroke="#c27630" stroke-width="7" stroke-linecap="round" stroke-linejoin="round"/><path d="M1175,575 L1175,600 L1175,622" fill="none" stroke="#3892ac" stroke-opacity="1" stroke-width="7" stroke-dasharray="12 10" stroke-dashoffset="6" stroke-linejoin="round"/><path d="M1175,575 L1175,600 L1175,622" fill="none" stroke="#000" stroke-opacity=".3" stroke-width="2.8000000000000003" transform="translate(2.1,0)" stroke-linejoin="round"/><path d="M1158 628 C1167 622 1171.5 614 1172 602 L1178 602 C1178.5 614 1183 622 1192 628 z" fill="#3892ac"/><path d="M1169 580 Q1175 592 1181 580 z" fill="#3892ac"/><ellipse cx="1101" cy="542" rx="11" ry="10" fill="#b0702a"/><ellipse cx="1104" cy="543" rx="7" ry="6.5" fill="#2a3e3c"/><ellipse cx="1106" cy="544" rx="4" ry="4" fill="#4a6a60"/><ellipse cx="1249" cy="542" rx="11" ry="10" fill="#b0702a"/><ellipse cx="1246" cy="543" rx="7" ry="6.5" fill="#2a3e3c"/><ellipse cx="1244" cy="544" rx="4" ry="4" fill="#4a6a60"/><g clip-path="url(#rhead)"><g filter="url(#soft)"><rect x="1090" y="446" width="170" height="18" fill="#c27630"/><rect x="1090" y="464" width="170" height="23" fill="#3892ac"/><rect x="1090" y="487" width="170" height="23" fill="#c27630"/><rect x="1090" y="510" width="170" height="27" fill="#3892ac"/><rect x="1090" y="537" width="170" height="20" fill="#c27630"/><rect x="1090" y="557" width="170" height="27" fill="#3892ac"/></g></g></g><rect x="1140" y="615" width="70" height="230" fill="url(#rts)" clip-path="url(#rtorso)"/><rect x="1140" y="790" width="70" height="55" fill="url(#rtb)" clip-path="url(#rtorso)"/><defs><linearGradient id="hgl" x1="0" x2="1"><stop offset="0" stop-color="#a86a24"/><stop offset=".4" stop-color="#c88838"/><stop offset="1" stop-color="#7a4a18"/></linearGradient></defs><path d="M1103 853 L1114 853 Q1117 866 1122 872 L1131 889 Q1133 896 1127 896 L1119 884 Q1120 902 1126 922 Q1126 930 1118 927 Q1106 914 1100 896 Q1096 872 1103 853 z" fill="url(#hgl)" filter="url(#speck)"/><path d="M1104 880 Q1108 905 1116 922 M1110 882 Q1113 905 1121 922" stroke="#5a3810" stroke-opacity=".6" stroke-width=".9" fill="none"/><path d="M1248 840 L1258 840 Q1266 858 1266 880 Q1265 898 1259 910 Q1253 913 1251 906 Q1246 911 1240 906 Q1244 896 1246 888 Q1240 896 1236 902 Q1231 901 1235 892 Q1244 878 1245 862 z" fill="url(#hgl)" filter="url(#speck)"/><path d="M1256 862 Q1258 890 1252 905 M1250 870 Q1251 890 1246 904" stroke="#5a3810" stroke-opacity=".6" stroke-width=".9" fill="none"/><rect x="1152" y="506" width="56" height="36" rx="14" fill="#1d4a5a" opacity=".75" filter="url(#soft)"/><ellipse cx="1174" cy="514.5" rx="68" ry="67" fill="url(#rhs)"/><circle cx="1179" cy="663" r="11" fill="none" stroke="#333" stroke-opacity=".35" stroke-width="1.5"/><defs><radialGradient id="eyeb_r" cx=".45" cy=".3" r=".7"><stop offset="0" stop-color="#bfe6f0"/><stop offset=".45" stop-color="#3a7a90"/><stop offset="1" stop-color="#10303a" stop-opacity="0"/></radialGradient></defs><ellipse cx="1168" cy="525" rx="6" ry="5.5" fill="url(#eyeb_r)"/><ellipse cx="1187" cy="525" rx="6" ry="5.5" fill="url(#eyeb_r)"/><ellipse cx="1169" cy="529" rx="2.6" ry="2" fill="#0c0c0c"/><ellipse cx="1188" cy="529" rx="2.6" ry="2" fill="#0c0c0c"/><ellipse cx="1175" cy="565" rx="8" ry="3.6" fill="#101010"/><path d="M1169 567 Q1176 571 1184 566 Q1177 569.5 1169 567 z" fill="#7ab0c0"/><ellipse cx="1176.5" cy="567.5" rx="6" ry="1.6" fill="#5a8fa0"/></svg>
<div class="a" style="left:1317px;top:31px;width:459px;height:466px;background:rgba(0,0,0,.35);filter:blur(7px);border-radius:8px"></div>
<div class="a" style="left:1311px;top:23px;width:459px;height:466px;background:linear-gradient(90deg,#5a5a5a,#6a6a6a 30%,#575757 60%,#4c4c4c);border-radius:7px;box-shadow:0 0 0 1px #1e1e1e, inset 1px 1px 0 #d8d8d8, inset -1px -1px 0 #bbb"></div>
<div class="a" style="left:1314px;top:24px;width:106px;height:26px;background:radial-gradient(closest-side,rgba(235,235,235,.95) 0%,rgba(210,210,210,.8) 60%,rgba(110,110,110,0) 100%)"></div>
<div class="a" style="left:1541px;top:25px;width:140px;height:26px;background:radial-gradient(closest-side,rgba(200,200,200,.28) 0%,rgba(0,0,0,0) 100%)"></div>
<div class="a" style="left:1763px;top:40px;width:5px;height:440px;background:linear-gradient(#aaa,#eee 45%,#ccc 60%,#555 62%,#777)"></div>
<div class="a" style="left:1312px;top:60px;width:4px;height:420px;background:linear-gradient(#bbb,#ddd 50%,#666 52%,#bbb)"></div>
<svg class="a" style="left:1318px;top:29px;" width="16" height="17" viewBox="0 0 16 17"><defs><linearGradient id="mg1318_29" x1="0" y1="0" x2="1" y2="1"><stop offset="0" stop-color="#9ee4dc"/><stop offset=".35" stop-color="#3fb4ae"/><stop offset="1" stop-color="#0f7a7a"/></linearGradient></defs><rect x="0" y="0" width="16" height="17" fill="url(#mg1318_29)"/><path d="M1.92 13.26 L1.92 6.46 L8.0 1.7000000000000002 L14.08 6.46 L14.08 13.26 L11.2 13.26 L11.2 8.5 L8.0 12.24 L4.8 8.5 L4.8 13.26 z" fill="#0b4c52"/><path d="M8.0 1.7000000000000002 L8.0 12.24" stroke="#2a8a8a" stroke-width="1.28"/><rect x="2.4" y="13.94" width="11.2" height="1.7000000000000002" fill="#bdeee8" opacity=".8"/></svg>
<span class="t" style="left:1340px;top:32px;font-size:12px;color:#000;">Blend Shape</span>
<div class="a" style="left:1661px;top:23px;width:105px;height:19px;border:1px solid #999;border-top:none;border-radius:0 0 5px 5px;background:linear-gradient(#8a8a8a,#5e5e5e)"></div>
<div class="a" style="left:1714px;top:23px;width:51px;height:18px;background:linear-gradient(#e0705a,#c8321e 50%,#a82010);border-radius:0 0 5px 0"></div>
<div class="a" style="left:1688px;top:24px;width:1px;height:17px;background:#444"></div>
<div class="a" style="left:1713px;top:24px;width:1px;height:17px;background:#444"></div>
<div class="a" style="left:1669px;top:33px;width:12px;height:3px;background:#f4f4f4"></div>
<div class="a" style="left:1696px;top:27px;width:11px;height:9px;border:2px solid #f4f4f4"></div>
<span class="t" style="left:1733px;top:25px;font-size:15px;color:#fff;font-weight:bold;">X</span>
<div class="a" style="left:1316px;top:50px;width:449px;height:434px;background:#444;border:1px solid #c8c8c8;border-radius:2px"></div>
<div class="a" style="left:1318px;top:52px;width:445px;height:430px;border:1px solid #3a3a3a"></div>
<span class="t" style="left:1327px;top:59px;">Edit</span>
<span class="t" style="left:1360px;top:59px;">Options</span>
<span class="t" style="left:1412px;top:59px;">Help</span>
<div class="a" style="left:1329px;top:82px;width:424px;height:389px;border:1px solid #363636;border-radius:3px;box-shadow:inset 0 0 0 1px #4a4a4a"></div>
<div class="a" style="left:1332px;top:86px;width:402px;height:20px;background:linear-gradient(#525252,#4d4d4d);border-bottom:2px solid #2e2e2e;box-shadow:inset 0 1px 0 #5a5a5a"></div>
<svg class="a" style="left:1340px;top:91px;" width="10" height="8" viewBox="0 0 10 8"><path d="M0.5 0.5 L9.5 0.5 L5 6 z" fill="#c8c8c8"/></svg>
<span class="t" style="left:1358px;top:91px;color:#d4d4d4;font-weight:bold;">Harv_Blends</span>
<div class="a" style="left:1332px;top:107px;width:402px;height:212px;background:#464646;border:1px solid #3a3a3a;border-top:none"></div>
<div class="btn" style="left:1334px;top:108px;width:79px;height:21px;line-height:21px">Delete</div>
<div class="btn" style="left:1334px;top:131px;width:79px;height:21px;line-height:21px">Add Base</div>
<div class="btn" style="left:1334px;top:154px;width:79px;height:21px;line-height:21px">Key All</div>
<div class="btn" style="left:1334px;top:177px;width:79px;height:21px;line-height:21px">Reset All</div>
<div class="a" style="left:1417px;top:114px;width:59px;height:18px;background:#2b2b2b;border-radius:3px;box-shadow:0 0 0 1px #3b3b3b"></div>
<span class="t" style="left:1420px;top:119px;color:#d8d8d8;">Blink</span>
<div class="a" style="left:1480px;top:114px;width:59px;height:18px;background:#2b2b2b;border-radius:3px;box-shadow:0 0 0 1px #3b3b3b"></div>
<span class="t" style="left:1483px;top:119px;color:#d8d8d8;">0.459</span>
<div class="a" style="left:1542px;top:121px;width:120px;height:4px;background:#2a2a2a;border-radius:2px;box-shadow:0 1px 0 #555"></div>
<svg class="a" style="left:1591px;top:116px;" width="11" height="15" viewBox="0 0 11 15"><path d="M1 2 Q1 0.5 2.5 0.5 L8.5 0.5 Q10 0.5 10 2 L10 9 L5.5 14 L1 9 z" fill="#6c6c6c" stroke="#262626" stroke-width="1"/><path d="M3 3 v2 M7.5 3 v2" stroke="#bbb" stroke-width="1"/></svg>
<div class="btn" style="left:1673px;top:113px;width:60px;height:21px;line-height:21px">Key</div>
<div class="a" style="left:1417px;top:137px;width:59px;height:18px;background:#2b2b2b;border-radius:3px;box-shadow:0 0 0 1px #3b3b3b"></div>
<span class="t" style="left:1420px;top:142px;color:#d8d8d8;">Surprise</span>
<div class="a" style="left:1480px;top:137px;width:59px;height:18px;background:#2b2b2b;border-radius:3px;box-shadow:0 0 0 1px #3b3b3b"></div>
<span class="t" style="left:1483px;top:142px;color:#d8d8d8;">1.000</span>
<div class="a" style="left:1542px;top:144px;width:120px;height:4px;background:#2a2a2a;border-radius:2px;box-shadow:0 1px 0 #555"></div>
<svg class="a" style="left:1651px;top:139px;" width="11" height="15" viewBox="0 0 11 15"><path d="M1 2 Q1 0.5 2.5 0.5 L8.5 0.5 Q10 0.5 10 2 L10 9 L5.5 14 L1 9 z" fill="#6c6c6c" stroke="#262626" stroke-width="1"/><path d="M3 3 v2 M7.5 3 v2" stroke="#bbb" stroke-width="1"/></svg>
<div class="btn" style="left:1673px;top:136px;width:60px;height:21px;line-height:21px">Key</div>
<div class="a" style="left:1417px;top:160px;width:59px;height:18px;background:#2b2b2b;border-radius:3px;box-shadow:0 0 0 1px #3b3b3b"></div>
<span class="t" style="left:1420px;top:165px;color:#d8d8d8;">Frown</span>
<div class="a" style="left:1480px;top:160px;width:59px;height:18px;background:#2b2b2b;border-radius:3px;box-shadow:0 0 0 1px #3b3b3b"></div>
<span class="t" style="left:1483px;top:165px;color:#d8d8d8;">0.000</span>
<div class="a" style="left:1542px;top:167px;width:120px;height:4px;background:#2a2a2a;border-radius:2px;box-shadow:0 1px 0 #555"></div>
<svg class="a" style="left:1542px;top:162px;" width="11" height="15" viewBox="0 0 11 15"><path d="M1 2 Q1 0.5 2.5 0.5 L8.5 0.5 Q10 0.5 10 2 L10 9 L5.5 14 L1 9 z" fill="#6c6c6c" stroke="#262626" stroke-width="1"/><path d="M3 3 v2 M7.5 3 v2" stroke="#bbb" stroke-width="1"/></svg>
<div class="btn" style="left:1673px;top:159px;width:60px;height:21px;line-height:21px">Key</div>
<div class="a" style="left:1417px;top:183px;width:59px;height:18px;background:#2b2b2b;border-radius:3px;box-shadow:0 0 0 1px #3b3b3b"></div>
<span class="t" style="left:1420px;top:188px;color:#d8d8d8;">Pinch</span>
<div class="a" style="left:1480px;top:183px;width:59px;height:18px;background:#2b2b2b;border-radius:3px;box-shadow:0 0 0 1px #3b3b3b"></div>
<span class="t" style="left:1483px;top:188px;color:#d8d8d8;">0.000</span>
<div class="a" style="left:1542px;top:190px;width:120px;height:4px;background:#2a2a2a;border-radius:2px;box-shadow:0 1px 0 #555"></div>
<svg class="a" style="left:1542px;top:185px;" width="11" height="15" viewBox="0 0 11 15"><path d="M1 2 Q1 0.5 2.5 0.5 L8.5 0.5 Q10 0.5 10 2 L10 9 L5.5 14 L1 9 z" fill="#6c6c6c" stroke="#262626" stroke-width="1"/><path d="M3 3 v2 M7.5 3 v2" stroke="#bbb" stroke-width="1"/></svg>
<div class="btn" style="left:1673px;top:182px;width:60px;height:21px;line-height:21px">Key</div>
<div class="a" style="left:1417px;top:206px;width:59px;height:18px;background:#2b2b2b;border-radius:3px;box-shadow:0 0 0 1px #3b3b3b"></div>
<span class="t" style="left:1420px;top:211px;color:#d8d8d8;">Open</span>
<div class="a" style="left:1480px;top:206px;width:59px;height:18px;background:#2b2b2b;border-radius:3px;box-shadow:0 0 0 1px #3b3b3b"></div>
<span class="t" style="left:1483px;top:211px;color:#d8d8d8;">0.000</span>
<div class="a" style="left:1542px;top:213px;width:120px;height:4px;background:#2a2a2a;border-radius:2px;box-shadow:0 1px 0 #555"></div>
<svg class="a" style="left:1542px;top:208px;" width="11" height="15" viewBox="0 0 11 15"><path d="M1 2 Q1 0.5 2.5 0.5 L8.5 0.5 Q10 0.5 10 2 L10 9 L5.5 14 L1 9 z" fill="#6c6c6c" stroke="#262626" stroke-width="1"/><path d="M3 3 v2 M7.5 3 v2" stroke="#bbb" stroke-width="1"/></svg>
<div class="btn" style="left:1673px;top:205px;width:60px;height:21px;line-height:21px">Key</div>
<div class="a" style="left:1417px;top:229px;width:59px;height:18px;background:#2b2b2b;border-radius:3px;box-shadow:0 0 0 1px #3b3b3b"></div>
<span class="t" style="left:1420px;top:234px;color:#d8d8d8;">Smile</span>
<div class="a" style="left:1480px;top:229px;width:59px;height:18px;background:#2b2b2b;border-radius:3px;box-shadow:0 0 0 1px #3b3b3b"></div>
<span class="t" style="left:1483px;top:234px;color:#d8d8d8;">0.853</span>
<div class="a" style="left:1542px;top:236px;width:120px;height:4px;background:#2a2a2a;border-radius:2px;box-shadow:0 1px 0 #555"></div>
<svg class="a" style="left:1634px;top:231px;" width="11" height="15" viewBox="0 0 11 15"><path d="M1 2 Q1 0.5 2.5 0.5 L8.5 0.5 Q10 0.5 10 2 L10 9 L5.5 14 L1 9 z" fill="#6c6c6c" stroke="#262626" stroke-width="1"/><path d="M3 3 v2 M7.5 3 v2" stroke="#bbb" stroke-width="1"/></svg>
<div class="btn" style="left:1673px;top:228px;width:60px;height:21px;line-height:21px">Key</div>
<div class="a" style="left:1417px;top:252px;width:59px;height:18px;background:#2b2b2b;border-radius:3px;box-shadow:0 0 0 1px #3b3b3b"></div>
<span class="t" style="left:1420px;top:257px;color:#d8d8d8;">Closed</span>
<div class="a" style="left:1480px;top:252px;width:59px;height:18px;background:#2b2b2b;border-radius:3px;box-shadow:0 0 0 1px #3b3b3b"></div>
<span class="t" style="left:1483px;top:257px;color:#d8d8d8;">0.000</span>
<div class="a" style="left:1542px;top:259px;width:120px;height:4px;background:#2a2a2a;border-radius:2px;box-shadow:0 1px 0 #555"></div>
<svg class="a" style="left:1542px;top:254px;" width="11" height="15" viewBox="0 0 11 15"><path d="M1 2 Q1 0.5 2.5 0.5 L8.5 0.5 Q10 0.5 10 2 L10 9 L5.5 14 L1 9 z" fill="#6c6c6c" stroke="#262626" stroke-width="1"/><path d="M3 3 v2 M7.5 3 v2" stroke="#bbb" stroke-width="1"/></svg>
<div class="btn" style="left:1673px;top:251px;width:60px;height:21px;line-height:21px">Key</div>
<div class="a" style="left:1417px;top:275px;width:59px;height:18px;background:#2b2b2b;border-radius:3px;box-shadow:0 0 0 1px #3b3b3b"></div>
<span class="t" style="left:1420px;top:280px;color:#d8d8d8;">Side</span>
<div class="a" style="left:1480px;top:275px;width:59px;height:18px;background:#2b2b2b;border-radius:3px;box-shadow:0 0 0 1px #3b3b3b"></div>
<span class="t" style="left:1483px;top:280px;color:#d8d8d8;">0.477</span>
<div class="a" style="left:1542px;top:282px;width:120px;height:4px;background:#2a2a2a;border-radius:2px;box-shadow:0 1px 0 #555"></div>
<svg class="a" style="left:1594px;top:277px;" width="11" height="15" viewBox="0 0 11 15"><path d="M1 2 Q1 0.5 2.5 0.5 L8.5 0.5 Q10 0.5 10 2 L10 9 L5.5 14 L1 9 z" fill="#6c6c6c" stroke="#262626" stroke-width="1"/><path d="M3 3 v2 M7.5 3 v2" stroke="#bbb" stroke-width="1"/></svg>
<div class="btn" style="left:1673px;top:274px;width:60px;height:21px;line-height:21px">Key</div>
<div class="a" style="left:1417px;top:298px;width:59px;height:18px;background:#2b2b2b;border-radius:3px;box-shadow:0 0 0 1px #3b3b3b"></div>
<span class="t" style="left:1420px;top:303px;color:#d8d8d8;">Oooo</span>
<div class="a" style="left:1480px;top:298px;width:59px;height:18px;background:#2b2b2b;border-radius:3px;box-shadow:0 0 0 1px #3b3b3b"></div>
<span class="t" style="left:1483px;top:303px;color:#d8d8d8;">0.055</span>
<div class="a" style="left:1542px;top:305px;width:120px;height:4px;background:#2a2a2a;border-radius:2px;box-shadow:0 1px 0 #555"></div>
<svg class="a" style="left:1548px;top:300px;" width="11" height="15" viewBox="0 0 11 15"><path d="M1 2 Q1 0.5 2.5 0.5 L8.5 0.5 Q10 0.5 10 2 L10 9 L5.5 14 L1 9 z" fill="#6c6c6c" stroke="#262626" stroke-width="1"/><path d="M3 3 v2 M7.5 3 v2" stroke="#bbb" stroke-width="1"/></svg>
<div class="btn" style="left:1673px;top:297px;width:60px;height:21px;line-height:21px">Key</div>
<div class="btn" style="left:1334px;top:321px;width:78px;height:21px;line-height:21px">Select</div>
</body></html>
